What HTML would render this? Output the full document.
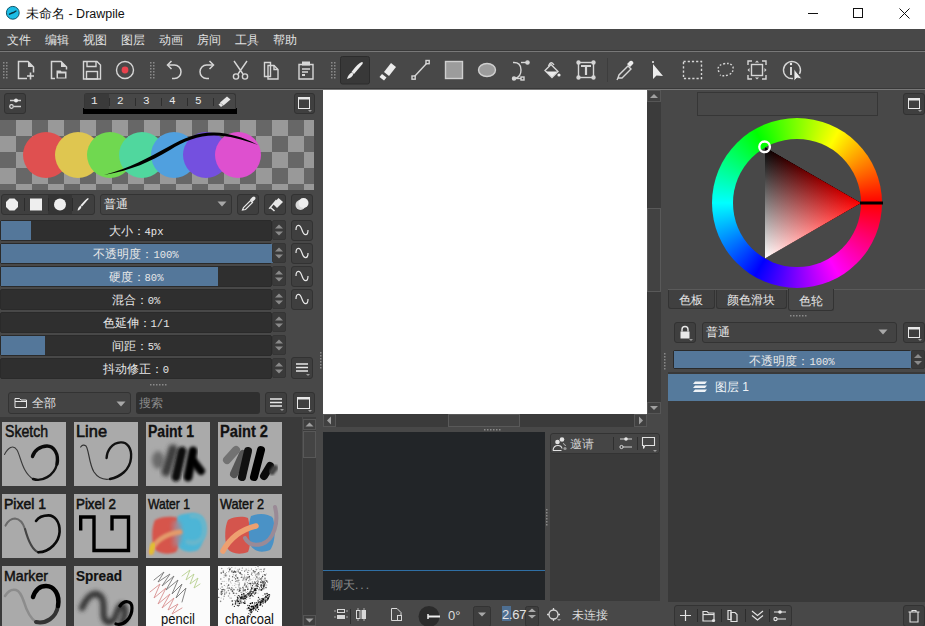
<!DOCTYPE html>
<html><head><meta charset="utf-8">
<style>
*{margin:0;padding:0;box-sizing:border-box}
html,body{width:925px;height:626px;overflow:hidden;background:#484848;font-family:"Liberation Sans",sans-serif;color:#e6e6e6;font-size:12px}
.a{position:absolute}
.t{position:absolute;white-space:nowrap;line-height:1}
svg{position:absolute;overflow:visible}
.btn{position:absolute;background:#3f3f3f;border:1px solid #323232;border-radius:3px}
.sl{position:absolute;background:#2f2f2f;height:21px;border:1px solid #2a2a2a;border-radius:2px}
.sl .f{position:absolute;left:0;top:0;bottom:0;background:#54779a}
.sl .lb{position:absolute;left:0;right:0;top:4px;text-align:center;font-size:12px;color:#e8e8e8;line-height:12px}
.spin{position:absolute;width:14px;height:20px;background:#3a3a3a;border:1px solid #353535;border-radius:2px}
.mono{font-family:"Liberation Mono",monospace;font-size:10.5px}
</style></head><body>
<!-- title bar -->
<div class="a" style="left:0;top:0;width:925px;height:29px;background:#fff"></div>
<!-- menu bar -->
<div class="a" style="left:0;top:29px;width:925px;height:21px;background:#484848"></div>
<div class="a" style="left:0;top:50px;width:925px;height:1px;background:#393939"></div>
<div class="a" style="left:0;top:51px;width:925px;height:1px;background:#787878"></div>
<!-- toolbar -->
<div class="a" style="left:0;top:52px;width:925px;height:36px;background:#484848"></div>
<div class="a" style="left:0;top:88px;width:925px;height:1px;background:#393939"></div>
<div class="a" style="left:0;top:89px;width:925px;height:1px;background:#787878"></div>


<!-- TITLE -->
<svg style="left:5px;top:5px" width="16" height="16" viewBox="0 0 16 16"><circle cx="7.8" cy="7.8" r="6.4" fill="#1cbde6" stroke="#0e5368" stroke-width="1"/><path d="M4.5 9.2 L7 8 L8.5 7.5 L11 6" stroke="#0b3340" stroke-width="1.4" stroke-linecap="round"/></svg>
<div class="t" style="left:26px;top:8px;font-size:12.5px;color:#111">未命名 - Drawpile</div>
<svg style="left:805px;top:5px" width="110" height="18" viewBox="0 0 110 18"><path d="M3 8.5H13" stroke="#111" stroke-width="1"/><rect x="48.5" y="3.5" width="9" height="9" fill="none" stroke="#111" stroke-width="1"/><path d="M94.5 3.5L104.5 13.5M104.5 3.5L94.5 13.5" stroke="#111" stroke-width="1"/></svg>
<!-- MENU -->
<div class="t" style="left:7px;top:34px;font-size:12px;color:#e2e2e2">文件</div>
<div class="t" style="left:45px;top:34px;font-size:12px;color:#e2e2e2">编辑</div>
<div class="t" style="left:83px;top:34px;font-size:12px;color:#e2e2e2">视图</div>
<div class="t" style="left:121px;top:34px;font-size:12px;color:#e2e2e2">图层</div>
<div class="t" style="left:159px;top:34px;font-size:12px;color:#e2e2e2">动画</div>
<div class="t" style="left:197px;top:34px;font-size:12px;color:#e2e2e2">房间</div>
<div class="t" style="left:235px;top:34px;font-size:12px;color:#e2e2e2">工具</div>
<div class="t" style="left:273px;top:34px;font-size:12px;color:#e2e2e2">帮助</div>
<!-- TOOLBAR -->
<svg style="left:0;top:52px" width="925" height="36" viewBox="0 0 925 36" fill="none" stroke="#d6d6d6" stroke-width="1.4">
 <g fill="#8a8a8a" stroke="none">
  <rect x="3" y="10" width="1.5" height="1.5"/><rect x="6" y="10" width="1.5" height="1.5"/><rect x="3" y="13" width="1.5" height="1.5"/><rect x="6" y="13" width="1.5" height="1.5"/><rect x="3" y="16" width="1.5" height="1.5"/><rect x="6" y="16" width="1.5" height="1.5"/><rect x="3" y="19" width="1.5" height="1.5"/><rect x="6" y="19" width="1.5" height="1.5"/><rect x="3" y="22" width="1.5" height="1.5"/><rect x="6" y="22" width="1.5" height="1.5"/><rect x="3" y="25" width="1.5" height="1.5"/><rect x="6" y="25" width="1.5" height="1.5"/>
  <rect x="150" y="10" width="1.5" height="1.5"/><rect x="153" y="10" width="1.5" height="1.5"/><rect x="150" y="13" width="1.5" height="1.5"/><rect x="153" y="13" width="1.5" height="1.5"/><rect x="150" y="16" width="1.5" height="1.5"/><rect x="153" y="16" width="1.5" height="1.5"/><rect x="150" y="19" width="1.5" height="1.5"/><rect x="153" y="19" width="1.5" height="1.5"/><rect x="150" y="22" width="1.5" height="1.5"/><rect x="153" y="22" width="1.5" height="1.5"/><rect x="150" y="25" width="1.5" height="1.5"/><rect x="153" y="25" width="1.5" height="1.5"/>
  <rect x="331" y="10" width="1.5" height="1.5"/><rect x="334" y="10" width="1.5" height="1.5"/><rect x="331" y="13" width="1.5" height="1.5"/><rect x="334" y="13" width="1.5" height="1.5"/><rect x="331" y="16" width="1.5" height="1.5"/><rect x="334" y="16" width="1.5" height="1.5"/><rect x="331" y="19" width="1.5" height="1.5"/><rect x="334" y="19" width="1.5" height="1.5"/><rect x="331" y="22" width="1.5" height="1.5"/><rect x="334" y="22" width="1.5" height="1.5"/><rect x="331" y="25" width="1.5" height="1.5"/><rect x="334" y="25" width="1.5" height="1.5"/>
 </g>
 <!-- new -->
 <path d="M27 26.5H18.5V9.5H28L33.5 15V20.5" stroke-width="1.5"/><path d="M28 9.5L33.5 15H28Z" fill="#d6d6d6" stroke="none"/><path d="M30.5 20.5V27.5M27 24H34" stroke-width="1.6"/>
 <!-- open -->
 <path d="M55 26.5H51.5V9.5H61L66.5 15V17.5" stroke-width="1.5"/><path d="M61 9.5L66.5 15H61Z" fill="#d6d6d6" stroke="none"/><path d="M56.5 18.5H60.5L61.5 19.5H66.5V26.5H56.5Z" fill="#d6d6d6" stroke="none"/><path d="M58 21.5H65V25.5H58Z" fill="#484848" stroke="none"/>
 <!-- save -->
 <path d="M83.5 9.5H97L100.5 13V27H83.5Z"/><path d="M87 9.5V14.5H96V9.5"/><rect x="86.5" y="19.5" width="11" height="7.5"/>
 <!-- record -->
 <circle cx="125" cy="18" r="8.5"/><circle cx="125" cy="18" r="3.4" fill="#e8424d" stroke="none"/>
 <!-- undo -->
 <path d="M168 13H174.5 A6.5 6.7 0 0 1 174.5 26.4 H172" stroke-width="1.5"/><path d="M171.5 9 L167.5 13 L171.5 17" stroke-width="1.5"/>
 <!-- redo -->
 <path d="M213 13H206.5 A6.5 6.7 0 0 0 206.5 26.4 H209" stroke-width="1.5"/><path d="M209.5 9 L213.5 13 L209.5 17" stroke-width="1.5"/>
 <!-- cut -->
 <path d="M234 9 L243 22 M247 9 L238 22"/><circle cx="236" cy="24.5" r="2.6"/><circle cx="245" cy="24.5" r="2.6"/>
 <!-- copy -->
 <path d="M264.5 10.5H270.5V24.5H264.5Z"/><path d="M268 13.5H274L278 17.5V27H268Z"/><path d="M274 13.5V17.5H278" />
 <!-- paste -->
 <path d="M299 12.5H313V27H299Z"/><rect x="302" y="9.5" width="8" height="4" fill="#d6d6d6" stroke="none"/><path d="M302 17H310M302 20H308"/><rect x="302" y="22" width="3" height="2" fill="#d6d6d6" stroke="none"/>
 <!-- brush selected box -->
 <rect x="340.5" y="4.5" width="29" height="27.5" rx="2" fill="#383838" stroke="#2c2c2c" stroke-width="1"/>
 <path d="M362 10 Q363.5 10 362.5 12 L354 22 L351.5 20 Q358 11 362 10Z" fill="#ececec" stroke="none"/><path d="M353.5 21.8 Q352 26 347 27 Q348 22.5 351.5 20.5Z" fill="#ececec" stroke="none"/>
 <!-- eraser -->
 <path d="M384 20 L391 11 L396 15 L389 24Z" fill="#ececec" stroke="none"/><path d="M379.5 25 L382 22 L386.5 25.5 L384 28.5Z" fill="#ececec" stroke="none"/>
 <!-- line -->
 <path d="M414 25 L427 11"/><rect x="412" y="24" width="3.2" height="3.2" fill="#484848"/><rect x="426" y="8.5" width="3.2" height="3.2" fill="#484848"/>
 <!-- rect -->
 <rect x="445.5" y="9.5" width="17" height="17" fill="#9c9c9c" stroke="#cfcfcf"/>
 <!-- ellipse -->
 <ellipse cx="487" cy="18" rx="8.5" ry="6.5" fill="#9c9c9c" stroke="#cfcfcf"/>
 <!-- bezier -->
 <path d="M513 10.5 Q521 10 521 18 Q521 25 515 26.5"/><path d="M521 10.5H527"/><circle cx="527.5" cy="10.5" r="1.6" fill="#d6d6d6"/><path d="M515 26.5H521"/><circle cx="514" cy="26.5" r="1.5" fill="#d6d6d6"/><rect x="521" y="25" width="3" height="3" fill="#484848"/>
 <!-- fill -->
 <path d="M545 18.5 L551 12.5 L558 19.5 L552 25.5Z" fill="none"/><path d="M546 19.5 L557.5 19.5 L552 25Z" fill="#ececec" stroke="none"/><path d="M548.5 14 Q551 8 554 13" /><circle cx="559" cy="23" r="1.6" fill="#ececec" stroke="none"/>
 <!-- text -->
 <rect x="578.5" y="10.5" width="15" height="15"/><circle cx="578.5" cy="10.5" r="1.5" fill="#d6d6d6"/><circle cx="593.5" cy="10.5" r="1.5" fill="#d6d6d6"/><circle cx="578.5" cy="25.5" r="1.5" fill="#d6d6d6"/><circle cx="593.5" cy="25.5" r="1.5" fill="#d6d6d6"/><path d="M581 14H591M586 14V23" stroke-width="2.2"/>
 <!-- sep -->
 <path d="M607.5 6V30" stroke="#3d3d3d" stroke-width="1"/>
 <!-- picker -->
 <path d="M618 26 L619 23 L628 14 L631 17 L622 26Z" fill="none"/><path d="M627 12 L630 9 Q632 8 633 10 Q634 11 633 12 L630 15Z" fill="#ececec" stroke="none"/><path d="M618 26 L617 28"/>
 <!-- select arrow -->
 <path d="M653 12 L653 27 L656.5 23.5 L663 24Z" fill="#ececec" stroke="none"/><circle cx="653" cy="10" r="1" fill="#ececec" stroke="none"/>
 <!-- rect select -->
 <rect x="683.5" y="9.5" width="18" height="17" stroke-dasharray="2.2 2"/>
 <!-- lasso -->
 <path d="M719 20 Q716 14 723 12 Q731 10 733 15 Q734 21 728 23 Q723 24.5 720 23" stroke-dasharray="1.8 1.8"/>
 <!-- transform -->
 <rect x="751.5" y="12.5" width="11" height="11"/><path d="M748 13V9H752M762 9H766V13M766 23V27H762M752 27H748V23" /><path d="M755 10.5h4l-2 -2Z M755 25.5h4l-2 2Z M749.5 16v4l-2 -2Z M764.5 16v4l2 -2Z" fill="#d6d6d6" stroke="none"/>
 <!-- inspector -->
 <path d="M799.5 22 A8.5 8.5 0 1 0 793 26.5"/><path d="M791 15V23" stroke-width="2"/><circle cx="791" cy="12" r="1.2" fill="#ececec" stroke="none"/><path d="M794 17 L794 29 L797 26 L802 27Z" fill="#ececec" stroke="#484848" stroke-width="0.8"/>
</svg>


<!-- LEFT PANEL -->
<div class="btn" style="left:4px;top:93px;width:22px;height:21px"></div>
<svg style="left:4px;top:93px" width="22" height="21"><path d="M6 7.5H17M10 13.5H17" stroke="#cfcfcf" stroke-width="1.4"/><circle cx="12" cy="7.5" r="2" fill="#e8e8e8"/><circle cx="7.5" cy="13.5" r="1.8" fill="#484848" stroke="#e0e0e0" stroke-width="1.2"/></svg>
<div class="a" style="left:83px;top:108px;width:154px;height:6px;background:#000"></div>
<div class="a" style="left:84px;top:93px;width:152px;height:16px;background:#474747;border:1px solid #363636;border-bottom:none;border-radius:3px 3px 0 0"></div>
<div class="a" style="left:85px;top:94px;width:24px;height:15px;background:#3a3a3a"></div>
<svg style="left:84px;top:93px" width="152" height="16"><g stroke="#2e2e2e" stroke-width="1"><path d="M25.5 5V13M51.5 5V13M77.5 5V13M103.5 5V13M129.5 5V13"/></g>
<path d="M136 9.5 L143 3.5 L146.5 6.5 L139.5 12.5Z" fill="#e6e6e6"/><path d="M134.5 11.5 L136.5 10 L139 12.5 L137 14Z" fill="#e6e6e6"/></svg>
<div class="t" style="left:91px;top:96px;font-family:'Liberation Mono',monospace;font-size:11px;color:#e8e8e8">1</div>
<div class="t" style="left:117px;top:96px;font-family:'Liberation Mono',monospace;font-size:11px;color:#e8e8e8">2</div>
<div class="t" style="left:143px;top:96px;font-family:'Liberation Mono',monospace;font-size:11px;color:#e8e8e8">3</div>
<div class="t" style="left:169px;top:96px;font-family:'Liberation Mono',monospace;font-size:11px;color:#e8e8e8">4</div>
<div class="t" style="left:195px;top:96px;font-family:'Liberation Mono',monospace;font-size:11px;color:#e8e8e8">5</div>
<div class="btn" style="left:294px;top:93px;width:21px;height:21px"></div>
<svg style="left:294px;top:93px" width="21" height="21"><rect x="4.5" y="4.5" width="11" height="11" fill="none" stroke="#e8e8e8" stroke-width="1"/><rect x="4" y="4" width="12" height="2.5" fill="#e8e8e8"/><path d="M14 17 L18 17 L16 19Z" fill="#9a9a9a"/></svg>

<!-- brush preview -->
<svg style="left:0;top:120px;overflow:hidden" width="314" height="70" viewBox="0 0 314 70">
<rect width="314" height="70" fill="#676767"/>
<g fill="#999999"><rect x="16" y="0" width="16" height="16"/><rect x="48" y="0" width="16" height="16"/><rect x="80" y="0" width="16" height="16"/><rect x="112" y="0" width="16" height="16"/><rect x="144" y="0" width="16" height="16"/><rect x="176" y="0" width="16" height="16"/><rect x="208" y="0" width="16" height="16"/><rect x="240" y="0" width="16" height="16"/><rect x="272" y="0" width="16" height="16"/><rect x="304" y="0" width="16" height="16"/><rect x="0" y="16" width="16" height="16"/><rect x="32" y="16" width="16" height="16"/><rect x="64" y="16" width="16" height="16"/><rect x="96" y="16" width="16" height="16"/><rect x="128" y="16" width="16" height="16"/><rect x="160" y="16" width="16" height="16"/><rect x="192" y="16" width="16" height="16"/><rect x="224" y="16" width="16" height="16"/><rect x="256" y="16" width="16" height="16"/><rect x="288" y="16" width="16" height="16"/><rect x="16" y="32" width="16" height="16"/><rect x="48" y="32" width="16" height="16"/><rect x="80" y="32" width="16" height="16"/><rect x="112" y="32" width="16" height="16"/><rect x="144" y="32" width="16" height="16"/><rect x="176" y="32" width="16" height="16"/><rect x="208" y="32" width="16" height="16"/><rect x="240" y="32" width="16" height="16"/><rect x="272" y="32" width="16" height="16"/><rect x="304" y="32" width="16" height="16"/><rect x="0" y="48" width="16" height="16"/><rect x="32" y="48" width="16" height="16"/><rect x="64" y="48" width="16" height="16"/><rect x="96" y="48" width="16" height="16"/><rect x="128" y="48" width="16" height="16"/><rect x="160" y="48" width="16" height="16"/><rect x="192" y="48" width="16" height="16"/><rect x="224" y="48" width="16" height="16"/><rect x="256" y="48" width="16" height="16"/><rect x="288" y="48" width="16" height="16"/><rect x="16" y="64" width="16" height="16"/><rect x="48" y="64" width="16" height="16"/><rect x="80" y="64" width="16" height="16"/><rect x="112" y="64" width="16" height="16"/><rect x="144" y="64" width="16" height="16"/><rect x="176" y="64" width="16" height="16"/><rect x="208" y="64" width="16" height="16"/><rect x="240" y="64" width="16" height="16"/><rect x="272" y="64" width="16" height="16"/><rect x="304" y="64" width="16" height="16"/></g>
<circle cx="46" cy="35" r="23" fill="#df5050"/>
<circle cx="78" cy="35" r="23" fill="#dfc650"/>
<circle cx="110" cy="35" r="23" fill="#70d850"/>
<circle cx="142" cy="35" r="23" fill="#50d79e"/>
<circle cx="174" cy="35" r="23" fill="#50a0df"/>
<circle cx="206" cy="35" r="23" fill="#7450df"/>
<circle cx="238" cy="35" r="23" fill="#de50cf"/>
<path d="M104 55 C130 48 148 38 168 27 C185 17 200 12 214 12.5 C230 13 245 18 258 25 C244 20 230 15.5 214 15.5 C198 15.5 184 21 170 30 C150 42 132 50 104 55Z" fill="#000"/>
</svg>

<!-- tool row -->
<div class="a" style="left:1px;top:194px;width:94px;height:21px;background:#3f3f3f;border:1px solid #323232;border-radius:3px"></div>
<div class="a" style="left:48px;top:195px;width:24px;height:19px;background:#353535"></div>
<svg style="left:1px;top:194px" width="94" height="21"><g stroke="#2c2c2c"><path d="M23.5 4V17M47.5 4V17M71.5 4V17"/></g>
<path d="M8.5 4.5H13.5L17 8V13L13.5 16.5H8.5L5 13V8Z" fill="#eeeeee"/>
<rect x="29" y="4.5" width="12" height="12" fill="#eeeeee"/>
<circle cx="59" cy="10.5" r="6" fill="#eeeeee"/>
<path d="M87 4 Q88 4 87.3 5.2 L81 12.5 L79.5 11.2 Q85 5 87 4Z" fill="#eeeeee"/><path d="M80.5 12.7 Q79.5 16 76.5 16.5 Q77 13.5 79.3 11.5Z" fill="#eeeeee"/></svg>
<div class="a" style="left:100px;top:194px;width:132px;height:21px;background:#434343;border:1px solid #333;border-radius:3px"></div>
<div class="t" style="left:104px;top:198px;font-size:12px;color:#e6e6e6">普通</div>
<svg style="left:217px;top:201px" width="10" height="6"><path d="M0.5 0.5H9.5L5 5.5Z" fill="#a8a8a8"/></svg>
<div class="btn" style="left:237px;top:194px;width:22px;height:21px"></div>
<svg style="left:237px;top:194px" width="22" height="21"><path d="M5.5 16 L6.5 13.5 L13.5 6.5 L15.5 8.5 L8.5 15.5Z" fill="none" stroke="#e8e8e8" stroke-width="1.2"/><path d="M13 5.5 L15.5 3 Q17 2 18 3 Q19 4 18 5.5 L15.5 8Z" fill="#e8e8e8"/></svg>
<div class="btn" style="left:264px;top:194px;width:22px;height:21px"></div>
<svg style="left:264px;top:194px" width="22" height="21"><path d="M9 10 L14.5 4 L19 8 L13 14Z" fill="#e8e8e8"/><path d="M4.5 14.5 L12 5.5 L13 6.5 L6 15Z" fill="#e8e8e8"/><path d="M7 13 L11 16.5 L10 17.5 L6 14Z" fill="#e8e8e8"/></svg>
<div class="btn" style="left:291px;top:194px;width:22px;height:21px"></div>
<svg style="left:291px;top:194px" width="22" height="21"><circle cx="9.5" cy="11" r="5" fill="#d8d8d8"/><circle cx="12.5" cy="9" r="5" fill="#eeeeee"/></svg>
<div class="sl" style="left:0;top:220px;width:272px"><div class="f" style="width:30px"></div><div class="lb">大小：<span class="mono">4px</span></div></div>
<div class="spin" style="left:272px;top:220px"></div><svg style="left:272px;top:220px" width="14" height="20"><path d="M3 8.5H11L7 4.5Z M3 11.5H11L7 15.5Z" fill="#8a8a8a"/></svg>
<div class="btn" style="left:291px;top:220px;width:22px;height:21px"></div><svg style="left:291px;top:220px" width="22" height="21"><path d="M5 10 C5 4 9 3.5 11 10 C13 16.5 17 16 17 10" fill="none" stroke="#e8e8e8" stroke-width="1.2"/></svg>
<div class="sl" style="left:0;top:243px;width:272px"><div class="f" style="width:272px"></div><div class="lb">不透明度：<span class="mono">100%</span></div></div>
<div class="spin" style="left:272px;top:243px"></div><svg style="left:272px;top:243px" width="14" height="20"><path d="M3 8.5H11L7 4.5Z M3 11.5H11L7 15.5Z" fill="#8a8a8a"/></svg>
<div class="btn" style="left:291px;top:243px;width:22px;height:21px"></div><svg style="left:291px;top:243px" width="22" height="21"><path d="M5 10 C5 4 9 3.5 11 10 C13 16.5 17 16 17 10" fill="none" stroke="#e8e8e8" stroke-width="1.2"/></svg>
<div class="sl" style="left:0;top:266px;width:272px"><div class="f" style="width:217px"></div><div class="lb">硬度：<span class="mono">80%</span></div></div>
<div class="spin" style="left:272px;top:266px"></div><svg style="left:272px;top:266px" width="14" height="20"><path d="M3 8.5H11L7 4.5Z M3 11.5H11L7 15.5Z" fill="#8a8a8a"/></svg>
<div class="btn" style="left:291px;top:266px;width:22px;height:21px"></div><svg style="left:291px;top:266px" width="22" height="21"><path d="M5 10 C5 4 9 3.5 11 10 C13 16.5 17 16 17 10" fill="none" stroke="#e8e8e8" stroke-width="1.2"/></svg>
<div class="sl" style="left:0;top:289px;width:272px"><div class="f" style="width:0px"></div><div class="lb">混合：<span class="mono">0%</span></div></div>
<div class="spin" style="left:272px;top:289px"></div><svg style="left:272px;top:289px" width="14" height="20"><path d="M3 8.5H11L7 4.5Z M3 11.5H11L7 15.5Z" fill="#8a8a8a"/></svg>
<div class="btn" style="left:291px;top:289px;width:22px;height:21px"></div><svg style="left:291px;top:289px" width="22" height="21"><path d="M5 10 C5 4 9 3.5 11 10 C13 16.5 17 16 17 10" fill="none" stroke="#e8e8e8" stroke-width="1.2"/></svg>
<div class="sl" style="left:0;top:312px;width:272px"><div class="f" style="width:0px"></div><div class="lb">色延伸：<span class="mono">1/1</span></div></div>
<div class="spin" style="left:272px;top:312px"></div><svg style="left:272px;top:312px" width="14" height="20"><path d="M3 8.5H11L7 4.5Z M3 11.5H11L7 15.5Z" fill="#8a8a8a"/></svg>
<div class="sl" style="left:0;top:335px;width:272px"><div class="f" style="width:44px"></div><div class="lb">间距：<span class="mono">5%</span></div></div>
<div class="spin" style="left:272px;top:335px"></div><svg style="left:272px;top:335px" width="14" height="20"><path d="M3 8.5H11L7 4.5Z M3 11.5H11L7 15.5Z" fill="#8a8a8a"/></svg>
<div class="sl" style="left:0;top:358px;width:272px"><div class="f" style="width:0px"></div><div class="lb">抖动修正：<span class="mono">0</span></div></div>
<div class="spin" style="left:272px;top:358px"></div><svg style="left:272px;top:358px" width="14" height="20"><path d="M3 8.5H11L7 4.5Z M3 11.5H11L7 15.5Z" fill="#8a8a8a"/></svg>
<div class="btn" style="left:291px;top:357px;width:22px;height:22px"></div><svg style="left:291px;top:357px" width="22" height="22"><path d="M5 7H17M5 10.5H17M5 14H17" stroke="#e8e8e8" stroke-width="1.5"/><path d="M15 17H19L17 19Z" fill="#9a9a9a"/></svg>

<svg style="left:150px;top:384px" width="18" height="3"><g fill="#8a8a8a"><rect x="0" y="0" width="1.5" height="1.5"/><rect x="3" y="0" width="1.5" height="1.5"/><rect x="6" y="0" width="1.5" height="1.5"/><rect x="9" y="0" width="1.5" height="1.5"/><rect x="12" y="0" width="1.5" height="1.5"/><rect x="15" y="0" width="1.5" height="1.5"/></g></svg>
<div class="a" style="left:8px;top:392px;width:123px;height:22px;background:#434343;border:1px solid #333;border-radius:3px"></div>
<svg style="left:14px;top:397px" width="14" height="12"><path d="M1 1.5H5.5L7 3H12.5V10.5H1Z" fill="none" stroke="#e6e6e6" stroke-width="1"/><path d="M1 4.5H12.5" stroke="#e6e6e6" stroke-width="1"/></svg>
<div class="t" style="left:32px;top:397px;font-size:12px;color:#e6e6e6">全部</div>
<svg style="left:116px;top:401px" width="10" height="6"><path d="M0.5 0.5H9.5L5 5.5Z" fill="#a8a8a8"/></svg>
<div class="a" style="left:136px;top:392px;width:124px;height:22px;background:#2f2f2f;border-radius:3px"></div>
<div class="t" style="left:139px;top:397px;font-size:12px;color:#8a8a8a">搜索</div>
<div class="btn" style="left:265px;top:392px;width:22px;height:22px"></div><svg style="left:265px;top:392px" width="22" height="22"><path d="M5 7H17M5 10.5H17M5 14H17" stroke="#e8e8e8" stroke-width="1.5"/><path d="M15 17H19L17 19Z" fill="#9a9a9a"/></svg>
<div class="btn" style="left:293px;top:392px;width:22px;height:22px"></div>
<svg style="left:293px;top:392px" width="22" height="22"><rect x="4.5" y="5.5" width="12" height="11" fill="none" stroke="#e8e8e8" stroke-width="1"/><rect x="4" y="5" width="13" height="2.5" fill="#e8e8e8"/><path d="M15 18 L19 18 L17 20Z" fill="#9a9a9a"/></svg>

<!-- presets -->
<div class="a" style="left:0;top:417px;width:302px;height:209px;background:#3a3a3a"></div>
<div class="a" style="left:303px;top:417px;width:13px;height:209px;background:#3c3c3c"></div>


<svg style="left:0;top:417px;overflow:hidden" width="302" height="209" viewBox="0 417 302 209">
<defs>
<filter id="b2" x="-100%" y="-100%" width="300%" height="300%"><feGaussianBlur stdDeviation="2"/></filter>
<filter id="b1" x="-100%" y="-100%" width="300%" height="300%"><feGaussianBlur stdDeviation="1"/></filter>
<filter id="b15" x="-100%" y="-100%" width="300%" height="300%"><feGaussianBlur stdDeviation="1.6"/></filter>
<linearGradient id="gm" x1="0" y1="0" x2="1" y2="0"><stop offset="0" stop-color="#888"/><stop offset="0.5" stop-color="#555"/><stop offset="1" stop-color="#000"/></linearGradient>
</defs>
<g font-family="Liberation Sans, sans-serif" fill="#111">
<!-- row1 -->
<rect x="2" y="422" width="64" height="64" fill="#aaaaaa"/>
<rect x="74" y="422" width="64" height="64" fill="#aaaaaa"/>
<rect x="146" y="422" width="64" height="64" fill="#aaaaaa"/>
<rect x="218" y="422" width="64" height="64" fill="#aaaaaa"/>
<rect x="2" y="494" width="64" height="64" fill="#aaaaaa"/>
<rect x="74" y="494" width="64" height="64" fill="#aaaaaa"/>
<rect x="146" y="494" width="64" height="64" fill="#aaaaaa"/>
<rect x="218" y="494" width="64" height="64" fill="#aaaaaa"/>
<rect x="2" y="566" width="64" height="64" fill="#aaaaaa"/>
<rect x="74" y="566" width="64" height="64" fill="#aaaaaa"/>
<rect x="146" y="566" width="64" height="64" fill="#fbfbfb"/>
<rect x="218" y="566" width="64" height="64" fill="#fbfbfb"/>
<text x="5" y="437" font-size="16" textLength="43" lengthAdjust="spacingAndGlyphs" stroke="#111" stroke-width="0.5">Sketch</text>
<text x="76" y="437" font-size="16" textLength="31" lengthAdjust="spacingAndGlyphs" stroke="#111" stroke-width="0.6">Line</text>
<text x="148" y="437" font-size="16" font-weight="bold" textLength="46" lengthAdjust="spacingAndGlyphs" stroke="#111" stroke-width="0.3">Paint 1</text>
<text x="220" y="437" font-size="16" font-weight="bold" textLength="48" lengthAdjust="spacingAndGlyphs" stroke="#111" stroke-width="0.3">Paint 2</text>
<text x="4" y="509" font-size="15" textLength="42" lengthAdjust="spacingAndGlyphs" stroke="#111" stroke-width="0.6">Pixel 1</text>
<text x="76" y="509" font-size="15" textLength="40" lengthAdjust="spacingAndGlyphs" stroke="#111" stroke-width="0.6">Pixel 2</text>
<text x="148" y="509" font-size="15" textLength="42" lengthAdjust="spacingAndGlyphs" stroke="#111" stroke-width="0.5">Water 1</text>
<text x="220" y="509" font-size="15" textLength="44" lengthAdjust="spacingAndGlyphs" stroke="#111" stroke-width="0.5">Water 2</text>
<text x="4" y="581" font-size="15" textLength="44" lengthAdjust="spacingAndGlyphs" stroke="#111" stroke-width="0.5">Marker</text>
<text x="76" y="581" font-size="15" font-weight="bold" textLength="46" lengthAdjust="spacingAndGlyphs" stroke="#111" stroke-width="0.2">Spread</text>
<text x="161" y="624" font-size="14" fill="#111" textLength="34" lengthAdjust="spacingAndGlyphs">pencil</text>
<text x="225" y="624" font-size="14" fill="#111" textLength="49" lengthAdjust="spacingAndGlyphs">charcoal</text>
</g>
<g fill="none" stroke-linecap="round">
<!-- sketch -->
<g transform="translate(2 422)">
<path d="M2.5 32.5 C6 26 11 22 15 28 C19 35 20 50 31 57" stroke="#3a3a3a" stroke-width="1.1"/>
<path d="M31 57 C40 60 52 54 55 42" stroke="#111" stroke-width="2.4"/>
<path d="M55 42 C57 32 52 24 45 24 C38 24 32 29 30.5 34.5" stroke="#0a0a0a" stroke-width="3.4"/>
</g>
<!-- line -->
<g transform="translate(74 422)">
<path d="M6.7 25 C8 23 10 22.5 12 24 C15 28 15 42 20 50 C24 56 30 58 36 57" stroke="#333" stroke-width="1.2"/>
<path d="M36 57 C46 55 56 48 57 36 C58 26 53 20 46.7 20.4 C38 21 33 28 32.6 36" stroke="#111" stroke-width="2.4"/>
</g>
<!-- paint1 -->
<g transform="translate(146 422)">
<ellipse cx="12" cy="38" rx="6" ry="9" fill="#6a6a6a" filter="url(#b2)" stroke="none"/>
<path d="M20 50 L27 27" stroke="#3a3a3a" stroke-width="9" filter="url(#b2)"/>
<path d="M30 55 L36 29" stroke="#111" stroke-width="9" filter="url(#b15)"/>
<path d="M42 55 L47 29" stroke="#000" stroke-width="9" filter="url(#b15)"/>
<path d="M48 40 L55 49" stroke="#000" stroke-width="8" filter="url(#b15)"/>
</g>
<!-- paint2 -->
<g transform="translate(218 422)">
<path d="M9 38 L18 28" stroke="#727272" stroke-width="8"/>
<path d="M16 52 L25 32" stroke="#555" stroke-width="8"/>
<path d="M24 55 L30 29" stroke="#111" stroke-width="8"/>
<path d="M36 55 L43 28" stroke="#000" stroke-width="8"/>
<path d="M46 54 L52 44" stroke="#0a0a0a" stroke-width="8"/>
<path d="M54 50 L57 46" stroke="#444" stroke-width="6" filter="url(#b1)"/>
</g>
<!-- pixel1 -->
<g transform="translate(2 494)">
<path d="M3.5 31.6 C6 27 10 24.6 13 24.6 C18 25 21 29 23 35" stroke="#6a6a6a" stroke-width="2"/>
<path d="M23 35 C26 46 30 56 36.4 58.3" stroke="#444" stroke-width="2.2"/>
<path d="M36.4 58.3 C48 58 57 48 57.6 37.9 C58 27 52 21.4 46.6 21.4 C40 21.4 36 24 34 26.9" stroke="#0a0a0a" stroke-width="2.6"/>
</g>
<!-- pixel2 -->
<g transform="translate(74 494)">
<path d="M6.7 34.8 V23 H20 V56.5 H54.5 V23 H38 V34.8" stroke="#000" stroke-width="3.4" stroke-linecap="square" stroke-linejoin="miter"/>
</g>
<!-- water1 -->
<g transform="translate(146 494)">
<path d="M9 26 C16 22 26 22 32 24 C35 36 34 52 30 58 C22 61 12 60 8 54 C5 44 6 32 9 26Z" fill="#d6554c" stroke="none" filter="url(#b1)"/>
<path d="M32 22 C40 18 52 18 57 24 C60 36 58 50 52 56 C44 59 36 58 32 52 C29 42 29 30 32 22Z" fill="#4db5d6" stroke="none" filter="url(#b1)"/>
<path d="M26 28 C32 24 36 28 35 42 C34 52 30 56 27 52Z" fill="#b08088" stroke="none" filter="url(#b2)" opacity="0.85"/>
<path d="M5 58 C8 48 18 40 34 38" stroke="#e39a6a" stroke-width="5" filter="url(#b1)"/>
<path d="M5 58 L7 51" stroke="#e0c030" stroke-width="5" filter="url(#b1)"/>
<path d="M46 22 C56 20 60 30 58 40 C56 48 48 50 42 48" stroke="#68b6cc" stroke-width="5" filter="url(#b1)"/>
</g>
<!-- water2 -->
<g transform="translate(218 494)">
<path d="M10 26 C16 22 26 22 30 24 C33 36 33 52 30 58 C22 61 13 60 9 54 C6 44 7 32 10 26Z" fill="#d4554d" stroke="none"/>
<path d="M33 22 C40 19 50 19 55 24 C58 36 57 50 52 56 C44 59 37 58 33 52 C30 42 30 30 33 22Z" fill="#4a92c6" stroke="none"/>
<path d="M5 57 C12 44 22 36 38 32" stroke="#eea070" stroke-width="5.5"/>
<path d="M57 13 C61 28 56 46 44 50 C36 52 30 50 27 44" stroke="#9a8a96" stroke-width="4"/>
</g>
<!-- marker -->
<g transform="translate(2 566)">
<path d="M3 30 C6 25 10 23 14 24 C18 25 20 30 22 36 C25 46 28 52 34 56" stroke="#888" stroke-width="2.6" opacity="0.9"/>
<path d="M34 56 C44 58 54 52 56 40" stroke="#333" stroke-width="4"/>
<path d="M56 40 C58 28 52 20 44 20 C37 20 33 25 31 31" stroke="#000" stroke-width="4.5"/>
</g>
<!-- spread -->
<g transform="translate(74 566)">
<path d="M8 42 C14 28 22 24 28 32 C32 40 26 54 34 56 C42 58 42 44 46 40 C50 36 54 46 48 56" stroke="#333" stroke-width="6" filter="url(#b2)"/>
<path d="M46 40 C50 34 58 34 58 42 C58 52 50 60 42 58" stroke="#000" stroke-width="3.2"/>
</g>
<!-- pencil -->
<g transform="translate(146 566)" stroke-width="0.9">
<path d="M8 14 L18 6 L12 16 L24 8 L16 20 L28 10 L20 24 L32 14 L26 28 L36 18 L30 32 L40 22 L36 36" stroke="#777"/>
<path d="M4 26 L14 18 L8 32 L20 22 L12 38 L24 28 L16 42 L28 32 L22 44 L32 38 L26 48 L36 42" stroke="#d89090"/>
<path d="M36 10 L44 4 L40 14 L48 8 L44 18 L52 12 L48 22 L54 18" stroke="#b8d090"/>
</g>
<!-- charcoal -->
<g transform="translate(218 566)"><circle cx="11.3" cy="22.0" r="0.64" fill="#666"/><circle cx="35.6" cy="43.9" r="0.40" fill="#111"/><circle cx="39.7" cy="7.4" r="0.64" fill="#888"/><circle cx="46.7" cy="2.8" r="0.62" fill="#999"/><circle cx="33.2" cy="25.7" r="0.67" fill="#444"/><circle cx="28.0" cy="4.8" r="0.56" fill="#bbb"/><circle cx="27.9" cy="15.4" r="0.39" fill="#999"/><circle cx="22.8" cy="11.6" r="0.41" fill="#888"/><circle cx="35.9" cy="6.0" r="0.73" fill="#888"/><circle cx="43.0" cy="24.0" r="0.60" fill="#444"/><circle cx="32.4" cy="46.0" r="0.68" fill="#333"/><circle cx="36.6" cy="15.9" r="0.71" fill="#666"/><circle cx="38.2" cy="39.6" r="0.41" fill="#333"/><circle cx="36.8" cy="7.0" r="0.39" fill="#444"/><circle cx="28.4" cy="20.0" r="0.70" fill="#666"/><circle cx="42.9" cy="36.3" r="0.44" fill="#111"/><circle cx="12.3" cy="15.3" r="0.42" fill="#888"/><circle cx="34.8" cy="27.0" r="0.83" fill="#444"/><circle cx="36.5" cy="24.6" r="0.75" fill="#444"/><circle cx="20.2" cy="5.1" r="0.84" fill="#888"/><circle cx="9.4" cy="21.3" r="0.40" fill="#bbb"/><circle cx="3.5" cy="28.4" r="0.83" fill="#666"/><circle cx="31.9" cy="30.4" r="0.59" fill="#111"/><circle cx="9.2" cy="22.3" r="0.61" fill="#999"/><circle cx="43.7" cy="5.9" r="0.50" fill="#bbb"/><circle cx="19.0" cy="33.7" r="0.53" fill="#222"/><circle cx="25.5" cy="12.7" r="0.75" fill="#999"/><circle cx="45.1" cy="37.1" r="0.72" fill="#000"/><circle cx="44.8" cy="33.6" r="0.83" fill="#333"/><circle cx="45.6" cy="19.3" r="0.40" fill="#999"/><circle cx="19.9" cy="15.0" r="0.59" fill="#888"/><circle cx="43.3" cy="23.9" r="0.74" fill="#111"/><circle cx="31.9" cy="32.4" r="0.39" fill="#111"/><circle cx="42.0" cy="35.4" r="0.71" fill="#111"/><circle cx="10.8" cy="5.7" r="0.66" fill="#999"/><circle cx="31.5" cy="28.0" r="0.42" fill="#444"/><circle cx="42.3" cy="13.1" r="0.84" fill="#444"/><circle cx="41.9" cy="5.2" r="0.51" fill="#bbb"/><circle cx="44.8" cy="22.8" r="0.68" fill="#111"/><circle cx="41.8" cy="33.2" r="0.62" fill="#111"/><circle cx="14.7" cy="38.2" r="0.74" fill="#222"/><circle cx="9.6" cy="20.7" r="0.62" fill="#bbb"/><circle cx="38.1" cy="20.2" r="0.74" fill="#888"/><circle cx="33.7" cy="21.3" r="0.51" fill="#111"/><circle cx="42.5" cy="38.2" r="0.62" fill="#333"/><circle cx="47.0" cy="12.3" r="0.81" fill="#666"/><circle cx="32.6" cy="43.6" r="0.57" fill="#000"/><circle cx="12.3" cy="2.7" r="0.82" fill="#999"/><circle cx="27.1" cy="32.0" r="0.46" fill="#111"/><circle cx="33.4" cy="40.2" r="0.43" fill="#111"/><circle cx="26.1" cy="12.0" r="0.36" fill="#666"/><circle cx="30.9" cy="29.4" r="0.50" fill="#444"/><circle cx="33.2" cy="43.3" r="0.39" fill="#111"/><circle cx="43.0" cy="3.4" r="0.55" fill="#666"/><circle cx="30.7" cy="27.8" r="0.38" fill="#111"/><circle cx="32.2" cy="32.1" r="0.39" fill="#444"/><circle cx="29.7" cy="8.5" r="0.52" fill="#888"/><circle cx="45.5" cy="20.8" r="0.70" fill="#444"/><circle cx="49.3" cy="32.1" r="0.66" fill="#000"/><circle cx="19.7" cy="35.1" r="0.52" fill="#111"/><circle cx="13.8" cy="1.5" r="0.61" fill="#999"/><circle cx="21.4" cy="16.9" r="0.77" fill="#bbb"/><circle cx="26.7" cy="18.6" r="0.55" fill="#999"/><circle cx="7.6" cy="7.9" r="0.57" fill="#666"/><circle cx="28.3" cy="10.7" r="0.47" fill="#bbb"/><circle cx="22.1" cy="7.1" r="0.84" fill="#666"/><circle cx="24.3" cy="32.7" r="0.44" fill="#111"/><circle cx="6.1" cy="10.1" r="0.40" fill="#888"/><circle cx="31.6" cy="42.4" r="0.50" fill="#000"/><circle cx="28.8" cy="12.3" r="0.54" fill="#bbb"/><circle cx="46.0" cy="3.3" r="0.76" fill="#888"/><circle cx="29.8" cy="29.4" r="0.42" fill="#444"/><circle cx="33.0" cy="24.0" r="0.64" fill="#444"/><circle cx="43.3" cy="33.4" r="0.37" fill="#111"/><circle cx="45.5" cy="20.7" r="0.66" fill="#222"/><circle cx="37.3" cy="24.4" r="0.72" fill="#222"/><circle cx="32.4" cy="26.5" r="0.59" fill="#444"/><circle cx="47.2" cy="36.6" r="0.72" fill="#111"/><circle cx="38.6" cy="40.0" r="0.49" fill="#333"/><circle cx="29.8" cy="6.4" r="0.66" fill="#666"/><circle cx="24.9" cy="14.2" r="0.69" fill="#999"/><circle cx="25.0" cy="13.7" r="0.45" fill="#bbb"/><circle cx="50.4" cy="31.3" r="0.83" fill="#333"/><circle cx="15.8" cy="8.2" r="0.40" fill="#bbb"/><circle cx="22.3" cy="35.4" r="0.60" fill="#444"/><circle cx="44.4" cy="40.0" r="0.55" fill="#000"/><circle cx="42.8" cy="15.7" r="0.52" fill="#444"/><circle cx="40.0" cy="0.2" r="0.82" fill="#888"/><circle cx="3.5" cy="25.6" r="0.85" fill="#444"/><circle cx="25.8" cy="31.7" r="0.49" fill="#222"/><circle cx="34.5" cy="19.4" r="0.61" fill="#444"/><circle cx="21.5" cy="24.9" r="0.81" fill="#444"/><circle cx="40.9" cy="36.4" r="0.56" fill="#333"/><circle cx="20.8" cy="33.1" r="0.41" fill="#444"/><circle cx="17.8" cy="6.4" r="0.55" fill="#666"/><circle cx="25.8" cy="20.0" r="0.45" fill="#888"/><circle cx="40.6" cy="43.4" r="0.56" fill="#000"/><circle cx="23.9" cy="36.0" r="0.47" fill="#111"/><circle cx="28.1" cy="21.0" r="0.72" fill="#444"/><circle cx="12.9" cy="22.7" r="0.41" fill="#666"/><circle cx="36.5" cy="24.1" r="0.80" fill="#111"/><circle cx="30.4" cy="14.6" r="0.41" fill="#888"/><circle cx="38.3" cy="18.2" r="0.55" fill="#888"/><circle cx="49.0" cy="27.5" r="0.74" fill="#111"/><circle cx="11.9" cy="31.9" r="0.39" fill="#444"/><circle cx="16.4" cy="40.3" r="0.67" fill="#222"/><circle cx="7.1" cy="8.3" r="0.40" fill="#888"/><circle cx="44.3" cy="8.9" r="0.36" fill="#888"/><circle cx="21.4" cy="23.1" r="0.61" fill="#444"/><circle cx="14.1" cy="39.3" r="0.36" fill="#222"/><circle cx="32.6" cy="13.9" r="0.46" fill="#666"/><circle cx="17.5" cy="12.7" r="0.72" fill="#666"/><circle cx="23.0" cy="33.5" r="0.47" fill="#222"/><circle cx="38.1" cy="8.2" r="0.80" fill="#999"/><circle cx="40.3" cy="2.1" r="0.46" fill="#888"/><circle cx="33.3" cy="44.0" r="0.57" fill="#000"/><circle cx="25.8" cy="32.4" r="0.51" fill="#222"/><circle cx="46.4" cy="16.1" r="0.77" fill="#444"/><circle cx="39.3" cy="39.6" r="0.53" fill="#111"/><circle cx="33.5" cy="43.6" r="0.73" fill="#000"/><circle cx="38.1" cy="3.7" r="0.81" fill="#bbb"/><circle cx="20.5" cy="25.6" r="0.37" fill="#444"/><circle cx="5.6" cy="32.3" r="0.52" fill="#bbb"/><circle cx="45.0" cy="15.6" r="0.81" fill="#666"/><circle cx="36.0" cy="11.4" r="0.36" fill="#888"/><circle cx="25.3" cy="24.9" r="0.81" fill="#666"/><circle cx="32.5" cy="43.9" r="0.50" fill="#333"/><circle cx="20.3" cy="39.9" r="0.53" fill="#111"/><circle cx="32.4" cy="48.7" r="0.55" fill="#111"/><circle cx="30.0" cy="28.0" r="0.79" fill="#111"/><circle cx="35.9" cy="42.3" r="0.84" fill="#000"/><circle cx="34.6" cy="45.3" r="0.47" fill="#333"/><circle cx="40.7" cy="18.2" r="0.50" fill="#111"/><circle cx="27.2" cy="28.9" r="0.44" fill="#222"/><circle cx="15.6" cy="27.2" r="0.85" fill="#666"/><circle cx="23.4" cy="30.0" r="0.40" fill="#222"/><circle cx="39.4" cy="18.4" r="0.47" fill="#666"/><circle cx="29.6" cy="21.4" r="0.78" fill="#bbb"/><circle cx="15.1" cy="23.3" r="0.70" fill="#bbb"/><circle cx="10.8" cy="14.8" r="0.65" fill="#888"/><circle cx="23.0" cy="34.1" r="0.54" fill="#444"/><circle cx="19.3" cy="37.0" r="0.38" fill="#111"/><circle cx="20.0" cy="16.0" r="0.55" fill="#999"/><circle cx="46.1" cy="14.0" r="0.79" fill="#bbb"/><circle cx="4.5" cy="23.8" r="0.71" fill="#444"/><circle cx="0.8" cy="31.3" r="0.64" fill="#444"/><circle cx="37.8" cy="5.8" r="0.39" fill="#444"/><circle cx="26.4" cy="30.5" r="0.43" fill="#111"/><circle cx="6.0" cy="11.5" r="0.50" fill="#999"/><circle cx="32.0" cy="44.2" r="0.81" fill="#333"/><circle cx="43.2" cy="13.0" r="0.66" fill="#999"/><circle cx="19.6" cy="34.6" r="0.55" fill="#222"/><circle cx="28.5" cy="31.6" r="0.76" fill="#444"/><circle cx="40.8" cy="15.9" r="0.41" fill="#666"/><circle cx="32.3" cy="25.5" r="0.50" fill="#111"/><circle cx="19.2" cy="12.0" r="0.66" fill="#888"/><circle cx="13.7" cy="21.8" r="0.76" fill="#999"/><circle cx="4.2" cy="15.4" r="0.61" fill="#bbb"/><circle cx="30.7" cy="2.1" r="0.39" fill="#bbb"/><circle cx="43.0" cy="16.5" r="0.78" fill="#222"/><circle cx="45.0" cy="32.8" r="0.49" fill="#000"/><circle cx="45.0" cy="29.6" r="0.38" fill="#111"/><circle cx="37.2" cy="5.4" r="0.42" fill="#444"/><circle cx="45.7" cy="21.5" r="0.47" fill="#444"/><circle cx="11.0" cy="13.1" r="0.80" fill="#666"/><circle cx="35.4" cy="4.8" r="0.83" fill="#666"/><circle cx="26.9" cy="17.9" r="0.66" fill="#bbb"/><circle cx="40.1" cy="7.9" r="0.52" fill="#666"/><circle cx="14.3" cy="19.2" r="0.48" fill="#bbb"/><circle cx="45.6" cy="16.4" r="0.72" fill="#111"/><circle cx="21.8" cy="37.0" r="0.61" fill="#111"/><circle cx="33.0" cy="47.5" r="0.38" fill="#111"/><circle cx="23.2" cy="31.5" r="0.64" fill="#111"/><circle cx="20.5" cy="31.9" r="0.36" fill="#222"/><circle cx="43.6" cy="35.0" r="0.79" fill="#111"/><circle cx="38.0" cy="39.9" r="0.76" fill="#333"/><circle cx="40.1" cy="34.9" r="0.72" fill="#333"/><circle cx="41.3" cy="3.5" r="0.43" fill="#999"/><circle cx="30.4" cy="41.9" r="0.42" fill="#111"/><circle cx="28.0" cy="11.8" r="0.60" fill="#999"/><circle cx="30.3" cy="22.4" r="0.35" fill="#bbb"/><circle cx="42.5" cy="35.0" r="0.44" fill="#000"/><circle cx="34.8" cy="40.8" r="0.81" fill="#333"/><circle cx="37.3" cy="42.9" r="0.57" fill="#333"/><circle cx="40.3" cy="41.2" r="0.39" fill="#111"/><circle cx="23.0" cy="31.9" r="0.82" fill="#222"/><circle cx="26.8" cy="29.9" r="0.54" fill="#222"/><circle cx="51.3" cy="30.7" r="0.58" fill="#333"/><circle cx="45.0" cy="32.7" r="0.47" fill="#333"/><circle cx="44.2" cy="35.5" r="0.81" fill="#333"/><circle cx="5.4" cy="5.6" r="0.70" fill="#999"/><circle cx="9.6" cy="21.2" r="0.38" fill="#888"/><circle cx="28.1" cy="26.5" r="0.38" fill="#444"/><circle cx="49.0" cy="31.0" r="0.45" fill="#111"/><circle cx="44.8" cy="17.6" r="0.59" fill="#666"/><circle cx="37.5" cy="16.5" r="0.36" fill="#666"/><circle cx="14.5" cy="22.6" r="0.60" fill="#bbb"/><circle cx="43.9" cy="36.6" r="0.61" fill="#000"/><circle cx="21.5" cy="3.2" r="0.64" fill="#888"/><circle cx="21.6" cy="17.9" r="0.35" fill="#888"/><circle cx="25.3" cy="23.0" r="0.83" fill="#666"/><circle cx="35.6" cy="30.3" r="0.47" fill="#444"/><circle cx="39.7" cy="16.2" r="0.74" fill="#bbb"/><circle cx="25.5" cy="32.3" r="0.39" fill="#444"/><circle cx="30.8" cy="47.5" r="0.60" fill="#333"/><circle cx="40.1" cy="7.6" r="0.67" fill="#bbb"/><circle cx="18.6" cy="5.1" r="0.43" fill="#666"/><circle cx="38.2" cy="15.3" r="0.60" fill="#999"/><circle cx="34.4" cy="17.4" r="0.71" fill="#999"/><circle cx="26.8" cy="37.2" r="0.84" fill="#111"/><circle cx="19.0" cy="35.7" r="0.43" fill="#111"/><circle cx="16.2" cy="11.4" r="0.49" fill="#888"/><circle cx="42.2" cy="39.0" r="0.70" fill="#000"/><circle cx="35.1" cy="25.7" r="0.72" fill="#444"/><circle cx="13.1" cy="23.8" r="0.77" fill="#444"/><circle cx="38.1" cy="22.5" r="0.78" fill="#444"/><circle cx="34.9" cy="25.8" r="0.70" fill="#444"/><circle cx="32.9" cy="44.4" r="0.48" fill="#111"/><circle cx="21.1" cy="18.9" r="0.80" fill="#999"/><circle cx="4.1" cy="27.4" r="0.62" fill="#666"/><circle cx="36.7" cy="20.8" r="0.58" fill="#bbb"/><circle cx="24.3" cy="2.0" r="0.56" fill="#666"/><circle cx="33.6" cy="40.4" r="0.71" fill="#111"/><circle cx="36.0" cy="27.7" r="0.36" fill="#222"/><circle cx="20.8" cy="20.8" r="0.50" fill="#999"/><circle cx="48.8" cy="19.0" r="0.46" fill="#444"/><circle cx="36.0" cy="17.2" r="0.71" fill="#bbb"/><circle cx="31.5" cy="39.6" r="0.58" fill="#000"/><circle cx="27.8" cy="4.6" r="0.48" fill="#999"/><circle cx="14.2" cy="14.4" r="0.53" fill="#666"/><circle cx="23.5" cy="31.9" r="0.68" fill="#222"/><circle cx="46.5" cy="18.5" r="0.74" fill="#666"/><circle cx="39.8" cy="14.6" r="0.68" fill="#888"/><circle cx="7.7" cy="9.7" r="0.74" fill="#666"/><circle cx="18.9" cy="14.6" r="0.68" fill="#888"/><circle cx="46.3" cy="32.0" r="0.46" fill="#333"/><circle cx="40.5" cy="15.8" r="0.47" fill="#444"/><circle cx="23.9" cy="4.5" r="0.47" fill="#444"/><circle cx="30.1" cy="20.0" r="0.60" fill="#bbb"/><circle cx="25.7" cy="13.0" r="0.67" fill="#999"/><circle cx="14.2" cy="35.0" r="0.75" fill="#111"/><circle cx="24.9" cy="21.4" r="0.66" fill="#444"/><circle cx="39.1" cy="9.9" r="0.49" fill="#999"/><circle cx="13.7" cy="5.8" r="0.55" fill="#444"/><circle cx="19.9" cy="32.3" r="0.60" fill="#444"/><circle cx="14.3" cy="25.4" r="0.74" fill="#888"/><circle cx="34.3" cy="20.5" r="0.40" fill="#666"/><circle cx="39.2" cy="11.3" r="0.80" fill="#bbb"/><circle cx="33.7" cy="22.9" r="0.79" fill="#444"/><circle cx="4.1" cy="21.0" r="0.78" fill="#999"/><circle cx="10.5" cy="29.9" r="0.74" fill="#999"/><circle cx="23.0" cy="35.3" r="0.36" fill="#111"/><circle cx="35.6" cy="24.9" r="0.37" fill="#444"/><circle cx="40.1" cy="12.9" r="0.69" fill="#888"/><circle cx="47.3" cy="16.9" r="0.62" fill="#111"/><circle cx="22.7" cy="22.8" r="0.69" fill="#888"/><circle cx="46.1" cy="3.9" r="0.49" fill="#888"/><circle cx="29.8" cy="23.3" r="0.74" fill="#111"/><circle cx="43.2" cy="19.8" r="0.63" fill="#444"/><circle cx="32.9" cy="21.1" r="0.36" fill="#888"/><circle cx="32.8" cy="20.7" r="0.43" fill="#bbb"/><circle cx="41.1" cy="39.1" r="0.71" fill="#333"/><circle cx="13.1" cy="32.2" r="0.66" fill="#999"/><circle cx="22.4" cy="21.4" r="0.52" fill="#bbb"/><circle cx="31.0" cy="14.9" r="0.71" fill="#bbb"/><circle cx="6.1" cy="24.1" r="0.54" fill="#999"/><circle cx="37.0" cy="23.2" r="0.69" fill="#111"/><circle cx="17.0" cy="5.9" r="0.49" fill="#888"/><circle cx="44.6" cy="23.7" r="0.69" fill="#bbb"/><circle cx="38.6" cy="42.1" r="0.45" fill="#000"/><circle cx="46.0" cy="22.8" r="0.55" fill="#444"/><circle cx="45.4" cy="19.3" r="0.58" fill="#111"/><circle cx="38.7" cy="19.4" r="0.79" fill="#666"/><circle cx="29.9" cy="27.6" r="0.40" fill="#222"/><circle cx="34.5" cy="40.3" r="0.78" fill="#333"/><circle cx="44.6" cy="10.4" r="0.74" fill="#444"/><circle cx="29.0" cy="10.4" r="0.45" fill="#888"/><circle cx="40.4" cy="36.1" r="0.56" fill="#000"/><circle cx="47.0" cy="27.9" r="0.77" fill="#000"/><circle cx="47.2" cy="9.1" r="0.79" fill="#666"/><circle cx="46.5" cy="19.0" r="0.81" fill="#444"/><circle cx="17.5" cy="37.9" r="0.83" fill="#222"/><circle cx="27.1" cy="30.6" r="0.85" fill="#222"/><circle cx="2.8" cy="13.1" r="0.77" fill="#888"/><circle cx="35.0" cy="13.0" r="0.40" fill="#888"/><circle cx="3.2" cy="7.0" r="0.73" fill="#444"/><circle cx="18.5" cy="10.8" r="0.57" fill="#999"/><circle cx="49.6" cy="29.6" r="0.75" fill="#111"/><circle cx="38.6" cy="3.4" r="0.74" fill="#999"/><circle cx="48.3" cy="31.5" r="0.58" fill="#111"/><circle cx="38.6" cy="11.2" r="0.72" fill="#999"/><circle cx="22.1" cy="24.4" r="0.56" fill="#444"/><circle cx="14.5" cy="25.8" r="0.40" fill="#444"/><circle cx="22.1" cy="6.4" r="0.63" fill="#999"/><circle cx="32.5" cy="37.5" r="0.85" fill="#000"/><circle cx="49.5" cy="32.4" r="0.38" fill="#111"/><circle cx="25.0" cy="32.1" r="0.52" fill="#444"/><circle cx="2.1" cy="27.8" r="0.37" fill="#444"/><circle cx="16.2" cy="6.2" r="0.71" fill="#999"/><circle cx="5.1" cy="4.4" r="0.44" fill="#666"/><circle cx="32.9" cy="17.2" r="0.38" fill="#888"/><circle cx="28.4" cy="29.0" r="0.52" fill="#111"/><circle cx="47.0" cy="32.2" r="0.42" fill="#000"/><circle cx="19.2" cy="30.2" r="0.43" fill="#222"/><circle cx="27.6" cy="2.9" r="0.39" fill="#bbb"/><circle cx="16.0" cy="23.7" r="0.64" fill="#444"/><circle cx="37.7" cy="43.9" r="0.61" fill="#000"/><circle cx="36.6" cy="28.1" r="0.66" fill="#222"/><circle cx="17.0" cy="17.2" r="0.48" fill="#999"/><circle cx="41.7" cy="36.2" r="0.40" fill="#000"/><circle cx="45.1" cy="34.9" r="0.64" fill="#000"/><circle cx="20.9" cy="39.4" r="0.65" fill="#444"/><circle cx="30.7" cy="41.8" r="0.82" fill="#111"/><circle cx="29.3" cy="16.5" r="0.55" fill="#888"/><circle cx="45.0" cy="35.1" r="0.71" fill="#000"/><circle cx="42.6" cy="36.8" r="0.77" fill="#000"/><circle cx="26.8" cy="24.3" r="0.68" fill="#444"/><circle cx="7.3" cy="9.2" r="0.46" fill="#888"/><circle cx="20.0" cy="27.5" r="0.37" fill="#888"/><circle cx="23.2" cy="30.9" r="0.75" fill="#444"/><circle cx="8.5" cy="6.6" r="0.49" fill="#888"/><circle cx="28.4" cy="3.4" r="0.80" fill="#bbb"/><circle cx="27.3" cy="23.9" r="0.81" fill="#666"/><circle cx="23.8" cy="28.4" r="0.77" fill="#111"/><circle cx="33.2" cy="25.2" r="0.53" fill="#444"/><circle cx="33.3" cy="41.8" r="0.47" fill="#111"/><circle cx="25.3" cy="11.6" r="0.43" fill="#666"/><circle cx="35.9" cy="42.6" r="0.50" fill="#111"/><circle cx="23.0" cy="36.9" r="0.68" fill="#111"/><circle cx="41.0" cy="24.7" r="0.46" fill="#444"/><circle cx="45.5" cy="36.1" r="0.42" fill="#000"/><circle cx="30.2" cy="8.4" r="0.48" fill="#444"/><circle cx="35.4" cy="22.9" r="0.35" fill="#222"/><circle cx="30.5" cy="26.4" r="0.42" fill="#444"/><circle cx="35.1" cy="40.7" r="0.70" fill="#000"/><circle cx="16.5" cy="11.5" r="0.35" fill="#666"/><circle cx="46.7" cy="19.6" r="0.50" fill="#444"/><circle cx="31.2" cy="17.5" r="0.83" fill="#666"/><circle cx="21.2" cy="39.1" r="0.36" fill="#222"/><circle cx="41.2" cy="7.9" r="0.85" fill="#bbb"/><circle cx="31.5" cy="25.4" r="0.37" fill="#111"/><circle cx="30.5" cy="29.0" r="0.40" fill="#222"/><circle cx="17.9" cy="15.3" r="0.59" fill="#444"/><circle cx="29.5" cy="25.7" r="0.44" fill="#888"/><circle cx="45.3" cy="16.4" r="0.69" fill="#666"/><circle cx="51.0" cy="28.5" r="0.61" fill="#111"/><circle cx="35.4" cy="41.1" r="0.67" fill="#111"/><circle cx="28.8" cy="30.8" r="0.70" fill="#222"/><circle cx="-0.0" cy="23.2" r="0.77" fill="#444"/><circle cx="37.6" cy="27.4" r="0.63" fill="#444"/><circle cx="47.1" cy="31.5" r="0.56" fill="#111"/><circle cx="10.4" cy="24.5" r="0.82" fill="#999"/><circle cx="24.2" cy="11.0" r="0.51" fill="#bbb"/><circle cx="27.2" cy="32.6" r="0.78" fill="#222"/><circle cx="32.0" cy="48.3" r="0.38" fill="#111"/><circle cx="43.2" cy="36.0" r="0.47" fill="#333"/><circle cx="10.1" cy="19.4" r="0.50" fill="#444"/><circle cx="43.0" cy="19.0" r="0.69" fill="#222"/><circle cx="33.0" cy="27.6" r="0.59" fill="#444"/><circle cx="35.5" cy="44.2" r="0.35" fill="#111"/><circle cx="37.0" cy="41.4" r="0.52" fill="#000"/><circle cx="43.8" cy="21.4" r="0.47" fill="#444"/><circle cx="17.6" cy="9.7" r="0.75" fill="#666"/><circle cx="6.2" cy="7.8" r="0.57" fill="#bbb"/><circle cx="46.9" cy="35.1" r="0.55" fill="#333"/><circle cx="33.7" cy="29.1" r="0.46" fill="#222"/><circle cx="8.5" cy="26.1" r="0.84" fill="#bbb"/><circle cx="27.6" cy="29.8" r="0.69" fill="#222"/><circle cx="40.5" cy="15.9" r="0.42" fill="#bbb"/><circle cx="34.4" cy="15.9" r="0.68" fill="#999"/><circle cx="26.5" cy="11.0" r="0.71" fill="#888"/><circle cx="14.6" cy="25.0" r="0.74" fill="#444"/><circle cx="48.0" cy="33.7" r="0.53" fill="#111"/><circle cx="44.1" cy="34.6" r="0.70" fill="#333"/><circle cx="39.6" cy="8.7" r="0.49" fill="#888"/><circle cx="21.6" cy="31.3" r="0.43" fill="#444"/><circle cx="17.6" cy="13.1" r="0.63" fill="#999"/><circle cx="26.9" cy="14.0" r="0.52" fill="#bbb"/><circle cx="39.6" cy="17.7" r="0.65" fill="#bbb"/><circle cx="14.0" cy="5.0" r="0.72" fill="#666"/><circle cx="33.5" cy="8.2" r="0.61" fill="#666"/><circle cx="43.8" cy="11.9" r="0.60" fill="#444"/><circle cx="20.4" cy="29.6" r="0.59" fill="#222"/><circle cx="44.0" cy="16.4" r="0.83" fill="#999"/><circle cx="33.0" cy="28.0" r="0.52" fill="#111"/><circle cx="30.3" cy="4.3" r="0.47" fill="#444"/><circle cx="27.0" cy="12.6" r="0.42" fill="#666"/><circle cx="34.5" cy="29.8" r="0.62" fill="#222"/><circle cx="19.6" cy="31.7" r="0.77" fill="#111"/><circle cx="13.8" cy="21.8" r="0.38" fill="#888"/><circle cx="11.0" cy="22.3" r="0.57" fill="#666"/><circle cx="24.1" cy="31.9" r="0.85" fill="#111"/><circle cx="16.9" cy="29.5" r="0.48" fill="#444"/><circle cx="44.0" cy="19.2" r="0.35" fill="#111"/><circle cx="40.5" cy="31.5" r="0.70" fill="#333"/><circle cx="17.6" cy="35.9" r="0.77" fill="#111"/><circle cx="13.1" cy="17.7" r="0.40" fill="#999"/><circle cx="24.2" cy="30.2" r="0.76" fill="#444"/><circle cx="17.3" cy="18.8" r="0.38" fill="#999"/><circle cx="39.8" cy="20.3" r="0.82" fill="#888"/><circle cx="24.4" cy="8.5" r="0.42" fill="#888"/><circle cx="5.7" cy="23.3" r="0.59" fill="#444"/><circle cx="17.2" cy="2.0" r="0.56" fill="#bbb"/><circle cx="30.9" cy="14.3" r="0.35" fill="#444"/><circle cx="33.3" cy="40.8" r="0.57" fill="#111"/><circle cx="26.7" cy="32.0" r="0.61" fill="#111"/><circle cx="27.4" cy="18.3" r="0.66" fill="#bbb"/><circle cx="30.3" cy="42.0" r="0.63" fill="#000"/><circle cx="21.2" cy="21.6" r="0.79" fill="#bbb"/><circle cx="10.7" cy="21.8" r="0.54" fill="#bbb"/><circle cx="26.8" cy="29.1" r="0.48" fill="#111"/><circle cx="45.6" cy="5.3" r="0.67" fill="#666"/><circle cx="32.7" cy="19.3" r="0.64" fill="#bbb"/><circle cx="26.9" cy="17.2" r="0.75" fill="#888"/><circle cx="27.1" cy="11.5" r="0.40" fill="#bbb"/><circle cx="39.6" cy="45.3" r="0.59" fill="#333"/><circle cx="19.0" cy="18.6" r="0.36" fill="#888"/><circle cx="21.3" cy="37.5" r="0.80" fill="#111"/><circle cx="48.3" cy="7.9" r="0.43" fill="#666"/><circle cx="26.5" cy="27.4" r="0.41" fill="#111"/><circle cx="35.4" cy="21.2" r="0.53" fill="#bbb"/><circle cx="20.6" cy="19.0" r="0.48" fill="#999"/><circle cx="22.0" cy="22.5" r="0.59" fill="#888"/><circle cx="17.1" cy="5.7" r="0.77" fill="#444"/><circle cx="25.8" cy="32.9" r="0.82" fill="#111"/><circle cx="15.0" cy="6.8" r="0.39" fill="#888"/><circle cx="33.9" cy="22.3" r="0.70" fill="#222"/><circle cx="11.7" cy="28.5" r="0.46" fill="#bbb"/><circle cx="42.7" cy="37.0" r="0.71" fill="#000"/><circle cx="23.1" cy="26.2" r="0.52" fill="#444"/><circle cx="24.0" cy="26.5" r="0.49" fill="#999"/><circle cx="23.3" cy="8.3" r="0.85" fill="#999"/><circle cx="29.5" cy="18.2" r="0.67" fill="#bbb"/><circle cx="17.9" cy="21.2" r="0.50" fill="#888"/><circle cx="37.3" cy="23.0" r="0.79" fill="#111"/><circle cx="25.4" cy="27.7" r="0.60" fill="#111"/><circle cx="47.0" cy="33.0" r="0.35" fill="#111"/><circle cx="37.2" cy="39.8" r="0.81" fill="#000"/><circle cx="19.5" cy="33.3" r="0.63" fill="#444"/><circle cx="38.6" cy="39.0" r="0.64" fill="#111"/><circle cx="20.8" cy="14.3" r="0.77" fill="#888"/><circle cx="8.3" cy="27.0" r="0.47" fill="#666"/><circle cx="6.1" cy="15.4" r="0.67" fill="#bbb"/><circle cx="34.8" cy="21.6" r="0.52" fill="#bbb"/><circle cx="12.8" cy="16.2" r="0.46" fill="#888"/><circle cx="34.1" cy="16.9" r="0.44" fill="#666"/><circle cx="47.7" cy="35.1" r="0.84" fill="#000"/><circle cx="45.7" cy="17.9" r="0.38" fill="#666"/><circle cx="38.6" cy="24.5" r="0.46" fill="#222"/><circle cx="41.8" cy="23.0" r="0.62" fill="#111"/><circle cx="32.2" cy="24.1" r="0.47" fill="#111"/><circle cx="41.5" cy="21.8" r="0.50" fill="#444"/><circle cx="46.1" cy="19.0" r="0.61" fill="#444"/><circle cx="16.3" cy="19.4" r="0.43" fill="#666"/><circle cx="31.7" cy="29.2" r="0.42" fill="#444"/><circle cx="26.6" cy="19.0" r="0.72" fill="#666"/><circle cx="49.0" cy="28.6" r="0.36" fill="#333"/><circle cx="24.8" cy="32.8" r="0.81" fill="#444"/><circle cx="38.4" cy="44.1" r="0.40" fill="#111"/><circle cx="16.2" cy="34.7" r="0.38" fill="#111"/><circle cx="31.7" cy="26.9" r="0.78" fill="#444"/><circle cx="4.0" cy="25.5" r="0.73" fill="#666"/><circle cx="25.9" cy="32.0" r="0.75" fill="#444"/><circle cx="44.9" cy="15.8" r="0.49" fill="#666"/><circle cx="25.6" cy="25.6" r="0.83" fill="#bbb"/><circle cx="6.7" cy="23.9" r="0.74" fill="#888"/><circle cx="36.8" cy="37.0" r="0.69" fill="#000"/><circle cx="33.7" cy="42.9" r="0.43" fill="#000"/><circle cx="19.3" cy="39.4" r="0.56" fill="#222"/><circle cx="35.9" cy="26.1" r="0.64" fill="#222"/><circle cx="31.9" cy="4.8" r="0.57" fill="#bbb"/><circle cx="2.6" cy="35.3" r="0.83" fill="#888"/><circle cx="41.6" cy="37.6" r="0.42" fill="#333"/><circle cx="32.6" cy="29.5" r="0.83" fill="#111"/><circle cx="46.8" cy="16.8" r="0.49" fill="#888"/><circle cx="16.4" cy="5.3" r="0.74" fill="#444"/><circle cx="35.1" cy="42.4" r="0.62" fill="#000"/><circle cx="40.8" cy="23.6" r="0.48" fill="#444"/><circle cx="28.2" cy="13.7" r="0.75" fill="#444"/><circle cx="42.8" cy="38.8" r="0.70" fill="#000"/><circle cx="48.7" cy="14.9" r="0.77" fill="#222"/><circle cx="50.4" cy="32.6" r="0.69" fill="#000"/><circle cx="30.9" cy="11.6" r="0.61" fill="#444"/><circle cx="48.0" cy="21.6" r="0.78" fill="#444"/><circle cx="5.6" cy="33.6" r="0.39" fill="#666"/><circle cx="45.6" cy="33.4" r="0.80" fill="#000"/><circle cx="33.7" cy="13.5" r="0.38" fill="#999"/><circle cx="27.3" cy="32.2" r="0.47" fill="#111"/><circle cx="37.4" cy="9.3" r="0.51" fill="#888"/><circle cx="39.0" cy="11.9" r="0.40" fill="#444"/><circle cx="37.7" cy="13.0" r="0.50" fill="#444"/><circle cx="7.8" cy="20.1" r="0.42" fill="#bbb"/><circle cx="26.0" cy="30.4" r="0.61" fill="#111"/><circle cx="35.0" cy="41.9" r="0.38" fill="#000"/><circle cx="34.1" cy="9.5" r="0.40" fill="#444"/><circle cx="43.8" cy="23.3" r="0.66" fill="#111"/><circle cx="3.3" cy="17.8" r="0.83" fill="#666"/><circle cx="29.9" cy="11.4" r="0.81" fill="#999"/><circle cx="44.2" cy="16.3" r="0.78" fill="#666"/><circle cx="19.6" cy="14.1" r="0.40" fill="#888"/><circle cx="45.4" cy="16.7" r="0.44" fill="#111"/><circle cx="20.5" cy="6.1" r="0.72" fill="#999"/><circle cx="2.4" cy="22.2" r="0.41" fill="#444"/><circle cx="6.9" cy="27.0" r="0.63" fill="#999"/><circle cx="32.5" cy="17.6" r="0.77" fill="#444"/><circle cx="20.0" cy="3.3" r="0.61" fill="#999"/><circle cx="46.4" cy="8.7" r="0.68" fill="#666"/><circle cx="19.8" cy="23.5" r="0.78" fill="#999"/><circle cx="47.1" cy="34.0" r="0.45" fill="#111"/><circle cx="44.5" cy="16.1" r="0.53" fill="#222"/><circle cx="35.7" cy="41.2" r="0.71" fill="#111"/><circle cx="6.2" cy="30.3" r="0.75" fill="#999"/><circle cx="32.9" cy="18.2" r="0.45" fill="#444"/><circle cx="11.5" cy="27.2" r="0.76" fill="#888"/><circle cx="3.6" cy="23.6" r="0.69" fill="#999"/><circle cx="25.4" cy="36.7" r="0.74" fill="#222"/><circle cx="31.1" cy="28.0" r="0.83" fill="#222"/><circle cx="33.9" cy="7.1" r="0.78" fill="#999"/><circle cx="33.5" cy="46.2" r="0.79" fill="#111"/><circle cx="43.9" cy="32.6" r="0.51" fill="#000"/><circle cx="34.3" cy="36.9" r="0.84" fill="#000"/><circle cx="8.6" cy="9.2" r="0.58" fill="#999"/><circle cx="28.9" cy="28.3" r="0.41" fill="#111"/><circle cx="51.6" cy="28.9" r="0.59" fill="#000"/><circle cx="38.2" cy="19.4" r="0.78" fill="#666"/><circle cx="33.5" cy="27.9" r="0.73" fill="#111"/><circle cx="43.7" cy="18.9" r="0.65" fill="#444"/><circle cx="38.9" cy="39.2" r="0.44" fill="#111"/><circle cx="23.7" cy="11.2" r="0.75" fill="#666"/><circle cx="30.0" cy="27.7" r="0.65" fill="#222"/><circle cx="6.3" cy="19.4" r="0.56" fill="#999"/><circle cx="31.2" cy="40.8" r="0.43" fill="#000"/><circle cx="38.3" cy="36.4" r="0.50" fill="#000"/><circle cx="8.4" cy="10.8" r="0.41" fill="#bbb"/><circle cx="8.8" cy="17.8" r="0.49" fill="#999"/><circle cx="49.6" cy="16.0" r="0.60" fill="#444"/><circle cx="31.9" cy="44.7" r="0.64" fill="#333"/><circle cx="22.6" cy="32.0" r="0.85" fill="#111"/><circle cx="29.8" cy="5.0" r="0.46" fill="#bbb"/><circle cx="38.3" cy="10.3" r="0.65" fill="#888"/><circle cx="29.1" cy="42.7" r="0.52" fill="#000"/><circle cx="39.4" cy="38.4" r="0.74" fill="#000"/><circle cx="36.8" cy="5.7" r="0.74" fill="#666"/><circle cx="43.6" cy="14.2" r="0.75" fill="#888"/><circle cx="27.0" cy="19.6" r="0.45" fill="#888"/><circle cx="43.1" cy="20.0" r="0.84" fill="#444"/><circle cx="38.9" cy="22.1" r="0.42" fill="#111"/><circle cx="50.8" cy="28.7" r="0.65" fill="#333"/><circle cx="40.2" cy="16.6" r="0.62" fill="#bbb"/><circle cx="34.9" cy="43.3" r="0.73" fill="#000"/><circle cx="33.2" cy="40.5" r="0.64" fill="#000"/><circle cx="49.9" cy="32.9" r="0.75" fill="#000"/><circle cx="46.8" cy="16.9" r="0.46" fill="#222"/><circle cx="39.4" cy="17.5" r="0.75" fill="#111"/><circle cx="26.6" cy="5.1" r="0.56" fill="#444"/><circle cx="10.7" cy="19.0" r="0.66" fill="#444"/><circle cx="6.4" cy="9.3" r="0.75" fill="#bbb"/><circle cx="33.5" cy="3.0" r="0.52" fill="#666"/><circle cx="11.6" cy="9.9" r="0.50" fill="#444"/><circle cx="39.2" cy="15.2" r="0.55" fill="#999"/><circle cx="40.6" cy="6.8" r="0.72" fill="#666"/><circle cx="47.2" cy="14.1" r="0.54" fill="#444"/><circle cx="47.6" cy="30.8" r="0.52" fill="#333"/><circle cx="15.4" cy="8.7" r="0.75" fill="#bbb"/><circle cx="31.7" cy="13.0" r="0.63" fill="#888"/><circle cx="35.7" cy="17.9" r="0.82" fill="#888"/><circle cx="3.2" cy="32.0" r="0.60" fill="#bbb"/><circle cx="29.9" cy="39.4" r="0.73" fill="#333"/><circle cx="29.1" cy="12.1" r="0.60" fill="#444"/><circle cx="38.3" cy="39.0" r="0.60" fill="#333"/><circle cx="27.3" cy="25.7" r="0.43" fill="#888"/><circle cx="20.4" cy="35.4" r="0.84" fill="#111"/><circle cx="26.5" cy="28.9" r="0.45" fill="#111"/><circle cx="22.2" cy="7.1" r="0.75" fill="#444"/><circle cx="6.7" cy="28.1" r="0.67" fill="#444"/><circle cx="26.8" cy="35.1" r="0.68" fill="#111"/><circle cx="39.6" cy="40.6" r="0.81" fill="#333"/><circle cx="23.7" cy="30.8" r="0.37" fill="#222"/><circle cx="39.2" cy="41.7" r="0.84" fill="#000"/><circle cx="49.2" cy="33.9" r="0.77" fill="#000"/><circle cx="46.2" cy="20.7" r="0.67" fill="#444"/><circle cx="37.8" cy="26.2" r="0.77" fill="#444"/><circle cx="26.6" cy="9.0" r="0.62" fill="#999"/><circle cx="37.7" cy="23.8" r="0.69" fill="#111"/><circle cx="33.3" cy="45.0" r="0.64" fill="#111"/><circle cx="29.7" cy="6.8" r="0.43" fill="#999"/><circle cx="36.7" cy="22.9" r="0.72" fill="#222"/><circle cx="43.6" cy="34.7" r="0.79" fill="#333"/><circle cx="42.7" cy="13.4" r="0.49" fill="#bbb"/><circle cx="11.0" cy="1.9" r="0.53" fill="#888"/><circle cx="18.1" cy="34.7" r="0.58" fill="#222"/><circle cx="25.6" cy="28.9" r="0.63" fill="#444"/><circle cx="31.1" cy="44.3" r="0.50" fill="#111"/><circle cx="48.2" cy="30.2" r="0.75" fill="#333"/><circle cx="39.6" cy="17.7" r="0.36" fill="#999"/><circle cx="30.9" cy="30.9" r="0.39" fill="#444"/><circle cx="18.3" cy="27.6" r="0.75" fill="#888"/><circle cx="37.2" cy="40.6" r="0.64" fill="#000"/><circle cx="44.9" cy="16.8" r="0.44" fill="#bbb"/><circle cx="15.3" cy="6.3" r="0.74" fill="#444"/><circle cx="45.0" cy="32.5" r="0.77" fill="#333"/><circle cx="37.5" cy="1.4" r="0.38" fill="#888"/><circle cx="3.2" cy="26.7" r="0.63" fill="#666"/><circle cx="33.1" cy="28.8" r="0.37" fill="#222"/><circle cx="19.2" cy="23.9" r="0.52" fill="#888"/><circle cx="38.6" cy="38.3" r="0.81" fill="#111"/><circle cx="39.9" cy="37.2" r="0.61" fill="#111"/><circle cx="18.2" cy="8.7" r="0.71" fill="#999"/><circle cx="47.4" cy="31.9" r="0.43" fill="#000"/><circle cx="39.2" cy="39.9" r="0.64" fill="#333"/><circle cx="3.8" cy="26.2" r="0.45" fill="#888"/><circle cx="46.0" cy="18.0" r="0.79" fill="#444"/><circle cx="31.3" cy="10.6" r="0.79" fill="#444"/><circle cx="39.8" cy="20.5" r="0.73" fill="#444"/><circle cx="39.3" cy="22.5" r="0.69" fill="#444"/><circle cx="21.6" cy="30.1" r="0.65" fill="#111"/><circle cx="24.1" cy="9.2" r="0.35" fill="#999"/><circle cx="40.0" cy="27.1" r="0.37" fill="#444"/><circle cx="46.4" cy="16.2" r="0.82" fill="#999"/><circle cx="47.3" cy="34.5" r="0.81" fill="#333"/><circle cx="9.8" cy="2.8" r="0.44" fill="#888"/><circle cx="32.5" cy="43.3" r="0.81" fill="#000"/><circle cx="41.2" cy="11.5" r="0.66" fill="#bbb"/><circle cx="40.1" cy="33.9" r="0.50" fill="#333"/><circle cx="6.1" cy="25.7" r="0.45" fill="#444"/><circle cx="37.2" cy="17.0" r="0.84" fill="#444"/><circle cx="28.6" cy="33.2" r="0.39" fill="#222"/><circle cx="14.6" cy="10.7" r="0.73" fill="#666"/><circle cx="5.6" cy="4.4" r="0.54" fill="#bbb"/><circle cx="47.6" cy="30.4" r="0.73" fill="#333"/><circle cx="3.7" cy="2.5" r="0.77" fill="#999"/><circle cx="43.2" cy="5.6" r="0.48" fill="#999"/><circle cx="19.7" cy="12.1" r="0.73" fill="#444"/><circle cx="49.9" cy="28.1" r="0.36" fill="#111"/><circle cx="24.9" cy="30.5" r="0.35" fill="#111"/><circle cx="22.5" cy="34.1" r="0.40" fill="#222"/><circle cx="35.3" cy="39.3" r="0.41" fill="#333"/><circle cx="11.7" cy="3.5" r="0.82" fill="#444"/><circle cx="39.2" cy="19.8" r="0.49" fill="#222"/><circle cx="30.1" cy="49.7" r="0.66" fill="#111"/><circle cx="21.7" cy="34.0" r="0.47" fill="#111"/><circle cx="4.5" cy="24.6" r="0.42" fill="#bbb"/><circle cx="8.1" cy="15.5" r="0.36" fill="#bbb"/><circle cx="5.3" cy="6.3" r="0.81" fill="#666"/><circle cx="40.8" cy="8.9" r="0.57" fill="#999"/><circle cx="19.4" cy="35.2" r="0.37" fill="#222"/><circle cx="36.2" cy="38.8" r="0.52" fill="#333"/><circle cx="43.5" cy="21.6" r="0.68" fill="#444"/><circle cx="11.7" cy="4.5" r="0.54" fill="#888"/><circle cx="33.9" cy="27.5" r="0.48" fill="#222"/></g>
</g>
<!-- scrollbar -->
</svg>
<div class="a" style="left:303px;top:419px;width:13px;height:11px;background:#3f3f3f;border:1px solid #555"></div>
<svg style="left:303px;top:419px" width="13" height="11"><path d="M2.5 7.5H10.5L6.5 3.5Z" fill="#a0a0a0"/></svg>
<div class="a" style="left:303px;top:431px;width:13px;height:27px;background:#444;border:1px solid #585858"></div>
<div class="a" style="left:303px;top:615px;width:13px;height:11px;background:#3f3f3f;border:1px solid #555"></div>
<svg style="left:303px;top:615px" width="13" height="11"><path d="M2.5 3.5H10.5L6.5 7.5Z" fill="#a0a0a0"/></svg>

<!-- canvas -->
<div class="a" style="left:323px;top:90px;width:324px;height:324px;background:#fff"></div>
<!-- chat -->
<div class="a" style="left:323px;top:432px;width:222px;height:168px;background:#222528"></div>
<!-- users list -->
<div class="a" style="left:550px;top:453px;width:110px;height:148px;background:#3a3a3a"></div>
<!-- layer list -->
<div class="a" style="left:668px;top:372px;width:257px;height:230px;background:#393939"></div>


<!-- canvas scrollbars -->
<div class="a" style="left:647px;top:90px;width:14px;height:324px;background:#3b3b3b"></div>
<div class="a" style="left:647px;top:90px;width:14px;height:12px;background:#404040;border:1px solid #565656"></div>
<svg style="left:647px;top:90px" width="14" height="12"><path d="M3 8H11L7 4Z" fill="#a0a0a0"/></svg>
<div class="a" style="left:647px;top:208px;width:14px;height:84px;background:#424242;border:1px solid #595959"></div>
<div class="a" style="left:647px;top:402px;width:14px;height:12px;background:#404040;border:1px solid #565656"></div>
<svg style="left:647px;top:402px" width="14" height="12"><path d="M3 4H11L7 8Z" fill="#a0a0a0"/></svg>
<div class="a" style="left:323px;top:414px;width:324px;height:13px;background:#3b3b3b"></div>
<div class="a" style="left:323px;top:414px;width:13px;height:13px;background:#404040;border:1px solid #565656"></div>
<svg style="left:323px;top:414px" width="13" height="13"><path d="M8 2.5V10.5L4 6.5Z" fill="#a0a0a0"/></svg>
<div class="a" style="left:448px;top:414px;width:72px;height:13px;background:#424242;border:1px solid #595959"></div>
<div class="a" style="left:634px;top:414px;width:13px;height:13px;background:#404040;border:1px solid #565656"></div>
<svg style="left:634px;top:414px" width="13" height="13"><path d="M5 2.5V10.5L9 6.5Z" fill="#a0a0a0"/></svg>
<svg style="left:484px;top:429px" width="18" height="3"><g fill="#8a8a8a"><rect x="0" y="0" width="1.5" height="1.5"/><rect x="3" y="0" width="1.5" height="1.5"/><rect x="6" y="0" width="1.5" height="1.5"/><rect x="9" y="0" width="1.5" height="1.5"/><rect x="12" y="0" width="1.5" height="1.5"/><rect x="15" y="0" width="1.5" height="1.5"/></g></svg>
<svg style="left:320px;top:352px" width="3" height="18"><g fill="#8a8a8a"><rect y="0" x="0" width="1.5" height="1.5"/><rect y="3" x="0" width="1.5" height="1.5"/><rect y="6" x="0" width="1.5" height="1.5"/><rect y="9" x="0" width="1.5" height="1.5"/><rect y="12" x="0" width="1.5" height="1.5"/><rect y="15" x="0" width="1.5" height="1.5"/></g></svg>
<!-- chat -->
<div class="a" style="left:323px;top:570px;width:222px;height:1px;background:#2f6fa5"></div>
<div class="t" style="left:331px;top:579px;font-size:12px;color:#8c8c8c">聊天<span style="letter-spacing:2px">...</span></div>
<svg style="left:546px;top:509px" width="3" height="18"><g fill="#8a8a8a"><rect y="0" x="0" width="1.5" height="1.5"/><rect y="3" x="0" width="1.5" height="1.5"/><rect y="6" x="0" width="1.5" height="1.5"/><rect y="9" x="0" width="1.5" height="1.5"/><rect y="12" x="0" width="1.5" height="1.5"/><rect y="15" x="0" width="1.5" height="1.5"/></g></svg>
<!-- users -->
<div class="a" style="left:550px;top:433px;width:110px;height:21px;background:#454545;border:1px solid #333;border-radius:3px"></div>
<svg style="left:550px;top:433px" width="110" height="21"><path d="M63.5 4V17M87.5 4V17" stroke="#2f2f2f"/>
<circle cx="7.5" cy="9" r="2.3" fill="#e2e2e2"/><circle cx="12" cy="6.5" r="2.3" fill="#e2e2e2"/><path d="M3 17.5 Q3.5 12.5 8 12.5 Q11.5 12.5 12 15.5 M3 17.5H11.5" fill="none" stroke="#e2e2e2" stroke-width="1.1"/><path d="M13 10.5 Q15 11 15.5 13" fill="none" stroke="#bbb" stroke-width="1"/><circle cx="15" cy="15.5" r="1.6" fill="#999"/>
<path d="M70 6H82M70 14H82" stroke="#d0d0d0" stroke-width="1.2"/><circle cx="76" cy="6" r="1.8" fill="#e8e8e8"/><circle cx="71.5" cy="14" r="1.6" fill="#424242" stroke="#e0e0e0" stroke-width="1"/>
<path d="M92.5 4.5H104.5V12.5H95L93.5 15.5V12.5H92.5Z" fill="none" stroke="#e2e2e2" stroke-width="1.1"/><path d="M103 17H107L105 19Z" fill="#9a9a9a"/>
</svg>
<div class="t" style="left:570px;top:438px;font-size:12px;color:#cfcfcf">邀请</div>
<!-- status bar -->
<svg style="left:320px;top:600px" width="345" height="26" fill="none" stroke="#d8d8d8" stroke-width="1">
<rect x="17.5" y="9.5" width="7" height="3"/><rect x="17.5" y="15.5" width="7" height="3" fill="#d8d8d8"/><path d="M14 11H16M26 11H28M14 17H16M26 17H28" stroke="#aaa"/><path d="M30.5 9V24" stroke="#2e2e2e"/>
<rect x="36.5" y="10.5" width="3.5" height="8"/><rect x="42" y="10.5" width="3.5" height="8" fill="#d8d8d8"/><path d="M38 8V10M44 8V10M38 19V21M44 19V21" stroke="#aaa"/>
<path d="M71.5 8.5H77L81 12.5V20.5H71.5Z"/><rect x="77.5" y="15.5" width="4" height="5" fill="#484848"/>
<circle cx="109" cy="16.5" r="10.5" fill="#2b2b2b" stroke="none"/><path d="M108 16.5H120" stroke="#eee" stroke-width="2"/><path d="M108 14V19" stroke="#eee" stroke-width="1.5"/>
<rect x="153.5" y="6.5" width="17" height="20" rx="2" fill="#3e3e3e" stroke="#333"/><path d="M158 12.5H166L162 16.5Z" fill="#a8a8a8" stroke="none"/>
<rect x="182" y="6" width="9" height="15" fill="#4e6f92" stroke="none"/>
<rect x="205.5" y="6.5" width="13" height="20" rx="2" fill="#3e3e3e" stroke="#333"/><path d="M208 12H216L212 8.5Z M208 15H216L212 18.5Z" fill="#a8a8a8" stroke="none"/>
<circle cx="233.5" cy="14.5" r="4.5" stroke-width="1.3"/><path d="M233.5 8V10M233.5 19V21M227 14.5H229M238 14.5H240" stroke-width="1.3"/><path d="M237 19H241L239 21Z" fill="#9a9a9a" stroke="none"/>
</svg>
<div class="t" style="left:448px;top:609px;font-size:13px;color:#dcdcdc">0°</div>
<div class="t" style="left:502px;top:608px;font-size:13px;color:#e2e2e2;letter-spacing:-0.3px">2.67</div>
<div class="t" style="left:572px;top:609px;font-size:12px;color:#dcdcdc">未连接</div>

<!-- RIGHT PANEL -->
<div class="a" style="left:697px;top:92px;width:181px;height:24px;border:1px solid #363636"></div>
<div class="btn" style="left:903px;top:93px;width:22px;height:22px"></div>
<svg style="left:903px;top:93px" width="22" height="22"><rect x="5.5" y="5.5" width="11" height="10" fill="none" stroke="#e8e8e8" stroke-width="1"/><rect x="5" y="5" width="12" height="2.5" fill="#e8e8e8"/><path d="M15 17 L19 17 L17 19Z" fill="#9a9a9a"/></svg>
<!-- wheel -->
<div class="a" style="left:712px;top:118px;width:170px;height:170px;border-radius:50%;background:conic-gradient(from 0deg, hsl(90,100%,50%) 0deg, hsl(60,100%,50%) 30deg, hsl(30,100%,50%) 60deg, hsl(0,100%,50%) 90deg, hsl(330,100%,50%) 120deg, hsl(300,100%,50%) 150deg, hsl(270,100%,50%) 180deg, hsl(240,100%,50%) 210deg, hsl(210,100%,50%) 240deg, hsl(180,100%,50%) 270deg, hsl(150,100%,50%) 300deg, hsl(120,100%,50%) 330deg, hsl(90,100%,50%) 360deg)"></div>
<div class="a" style="left:733px;top:139px;width:128px;height:128px;border-radius:50%;background:#484848"></div>
<svg style="left:0;top:0" width="925" height="626" viewBox="0 0 925 626">
<defs>
<linearGradient id="tb" gradientUnits="userSpaceOnUse" x1="813" y1="175.3" x2="765" y2="258.4"><stop offset="0" stop-color="#000"/><stop offset="1" stop-color="#fff"/></linearGradient>
<linearGradient id="tc" gradientUnits="userSpaceOnUse" x1="765" y1="0" x2="861" y2="0"><stop offset="0" stop-color="#000"/><stop offset="1" stop-color="#f00"/></linearGradient>
</defs>
<g style="isolation:isolate">
<path d="M765 147.6 L861 203 L765 258.4Z" fill="url(#tb)"/>
<path d="M765 147.6 L861 203 L765 258.4Z" fill="url(#tc)" style="mix-blend-mode:plus-lighter"/>
</g>
<path d="M860 203H883" stroke="#000" stroke-width="3"/>
<circle cx="764.6" cy="146.8" r="5.3" fill="none" stroke="#fff" stroke-width="2.4"/>
</svg>
<!-- tabs -->
<div class="a" style="left:668px;top:289px;width:257px;height:1px;background:#5a5a5a"></div>
<div class="a" style="left:668px;top:290px;width:47px;height:19px;background:#404040;border:1px solid #333;border-top:none;border-radius:0 0 3px 3px"></div>
<div class="a" style="left:716px;top:290px;width:71px;height:19px;background:#404040;border:1px solid #333;border-top:none;border-radius:0 0 3px 3px"></div>
<div class="a" style="left:788px;top:289px;width:46px;height:22px;background:#484848;border:1px solid #333;border-top:none;border-radius:0 0 3px 3px"></div>
<div class="t" style="left:679px;top:294px;font-size:12px;color:#e6e6e6">色板</div>
<div class="t" style="left:727px;top:294px;font-size:12px;color:#e6e6e6">颜色滑块</div>
<div class="t" style="left:799px;top:295px;font-size:12px;color:#e6e6e6">色轮</div>
<svg style="left:790px;top:315px" width="18" height="3"><g fill="#8a8a8a"><rect x="0" y="0" width="1.5" height="1.5"/><rect x="3" y="0" width="1.5" height="1.5"/><rect x="6" y="0" width="1.5" height="1.5"/><rect x="9" y="0" width="1.5" height="1.5"/><rect x="12" y="0" width="1.5" height="1.5"/><rect x="15" y="0" width="1.5" height="1.5"/></g></svg>
<!-- layers header -->
<div class="btn" style="left:674px;top:322px;width:22px;height:21px"></div>
<svg style="left:674px;top:322px" width="22" height="21"><path d="M8 9.5V7.5 Q8 4.5 11 4.5 Q14 4.5 14 7.5V9.5" fill="none" stroke="#e8e8e8" stroke-width="1.4"/><rect x="6.5" y="9.5" width="9" height="7" fill="#e8e8e8"/><path d="M15 17H19L17 19Z" fill="#9a9a9a"/></svg>
<div class="a" style="left:702px;top:322px;width:195px;height:21px;background:#434343;border:1px solid #333;border-radius:3px"></div>
<div class="t" style="left:706px;top:326px;font-size:12px;color:#e6e6e6">普通</div>
<svg style="left:878px;top:329px" width="10" height="6"><path d="M0.5 0.5H9.5L5 5.5Z" fill="#a8a8a8"/></svg>
<div class="btn" style="left:903px;top:322px;width:22px;height:21px"></div>
<svg style="left:903px;top:322px" width="22" height="21"><rect x="5.5" y="5.5" width="11" height="10" fill="none" stroke="#e8e8e8" stroke-width="1"/><rect x="5" y="5" width="12" height="2.5" fill="#e8e8e8"/><path d="M15 17 L19 17 L17 19Z" fill="#9a9a9a"/></svg>
<div class="sl" style="left:673px;top:350px;width:238px;height:19px"><div class="f" style="width:238px"></div><div class="lb" style="top:4px">不透明度：<span class="mono">100%</span></div></div>
<div class="spin" style="left:911px;top:350px;height:19px"></div><svg style="left:911px;top:350px" width="14" height="19"><path d="M3 8H11L7 4Z M3 11H11L7 15Z" fill="#8a8a8a"/></svg>
<svg style="left:664px;top:353px" width="3" height="18"><g fill="#8a8a8a"><rect y="0" x="0" width="1.5" height="1.5"/><rect y="3" x="0" width="1.5" height="1.5"/><rect y="6" x="0" width="1.5" height="1.5"/><rect y="9" x="0" width="1.5" height="1.5"/><rect y="12" x="0" width="1.5" height="1.5"/><rect y="15" x="0" width="1.5" height="1.5"/></g></svg>
<!-- layer row -->
<div class="a" style="left:668px;top:374px;width:257px;height:27px;background:#557a9c"></div>
<svg style="left:692px;top:380px" width="16" height="14"><path d="M3 1.5H15L13 4H1Z M3 5.5H15L13 8H1Z M3 9.5H15L13 12H1Z" fill="#eef2f6"/></svg>
<div class="t" style="left:715px;top:381px;font-size:12px;color:#eef2f6">图层 1</div>
<!-- layers bottom -->
<div class="a" style="left:674px;top:605px;width:118px;height:22px;background:#424242;border:1px solid #333;border-radius:3px"></div>
<svg style="left:674px;top:605px" width="118" height="21" fill="none" stroke="#e2e2e2" stroke-width="1.2">
<path d="M23.5 4V17M47.5 4V17M71.5 4V17M95.5 4V17" stroke="#2c2c2c" stroke-width="1"/>
<path d="M6 10.5H17M11.5 5V16"/>
<path d="M29 6.5H33L34.5 8H40V16H29Z"/><path d="M29 9.5H40"/><circle cx="39.5" cy="15.5" r="1.6" fill="#e2e2e2" stroke="none"/>
<path d="M54 5.5H57V14.5H54Z"/><path d="M57 7.5H61L63 9.5V16.5H57Z"/>
<path d="M78 6L83.5 10.5L89 6M78 10.5L83.5 15L89 10.5"/>
<path d="M100 7H112M100 14H112"/><circle cx="106" cy="7" r="1.8" fill="#e8e8e8" stroke="none"/><circle cx="101.5" cy="14" r="1.6" fill="#424242"/>
</svg>
<div class="btn" style="left:903px;top:605px;width:22px;height:22px"></div>
<svg style="left:903px;top:605px" width="22" height="21" fill="none" stroke="#e2e2e2" stroke-width="1.1"><path d="M5.5 7H16.5M9 7V5.5H13V7M7 7.5V17H15V7.5"/></svg>

</body></html>
